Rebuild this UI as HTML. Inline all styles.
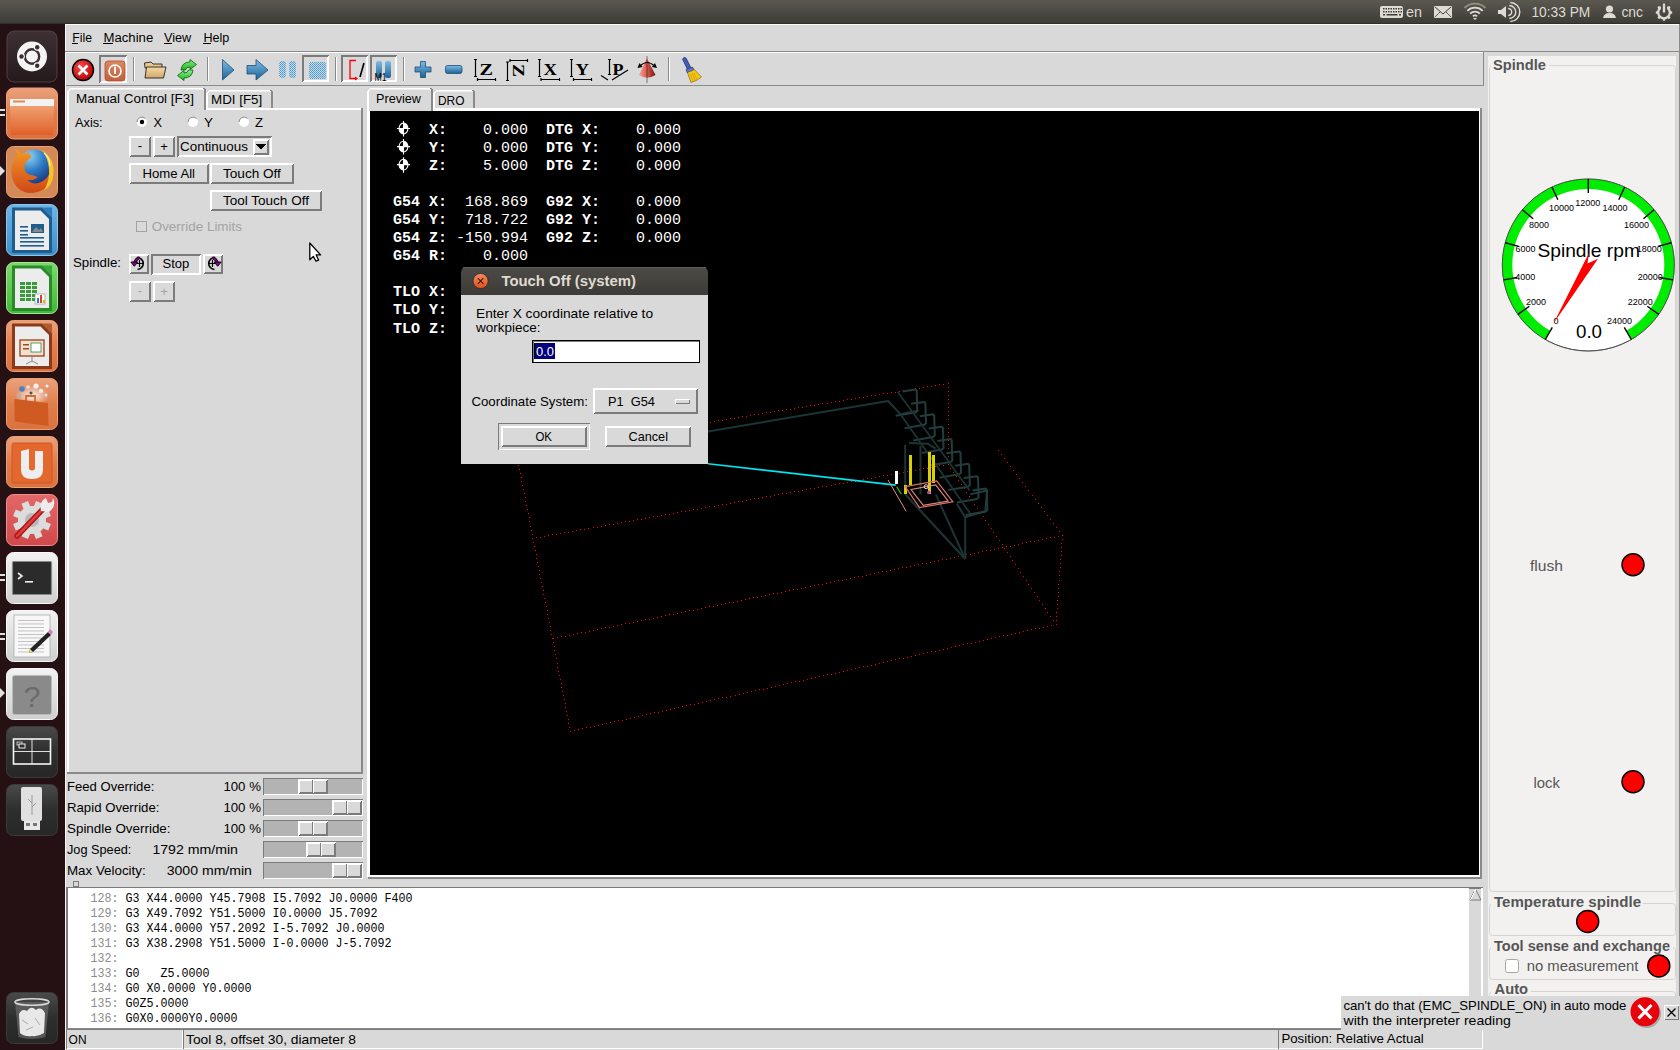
<!DOCTYPE html>
<html><head><meta charset="utf-8"><style>html,body{margin:0;padding:0;width:1680px;height:1050px;overflow:hidden;background:#d9d9d9}
text{white-space:pre}</style></head><body>
<svg width="1680" height="1050" viewBox="0 0 1680 1050" style="position:absolute;left:0;top:0" shape-rendering="crispEdges">
<defs>
<linearGradient id="panel" x1="0" y1="0" x2="0" y2="1"><stop offset="0" stop-color="#5b5850"/><stop offset="1" stop-color="#3c3b37"/></linearGradient>
<linearGradient id="ttl" x1="0" y1="0" x2="0" y2="1"><stop offset="0" stop-color="#4c4b46"/><stop offset="1" stop-color="#3c3b37"/></linearGradient>
</defs>
<rect x="0" y="0" width="1680" height="1050" fill="#d9d9d9" />
<rect x="0" y="0" width="1680" height="24" fill="url(#panel)" />
<rect x="0" y="23" width="1680" height="1" fill="#2f2e2a" />
<rect x="0" y="24" width="65" height="1026" fill="#251014" />
<rect x="65" y="24" width="1" height="1026" fill="#f6f6f6" />
<rect x="65" y="24" width="1615" height="1" fill="#fafafa" />
<text x="72.3" y="42" font-family="Liberation Sans" font-size="12.5" fill="#000" textLength="19.74" lengthAdjust="spacingAndGlyphs" >File</text>
<text x="103.4" y="42" font-family="Liberation Sans" font-size="12.5" fill="#000" textLength="49.85" lengthAdjust="spacingAndGlyphs" >Machine</text>
<text x="164.0" y="42" font-family="Liberation Sans" font-size="12.5" fill="#000" textLength="27.27" lengthAdjust="spacingAndGlyphs" >View</text>
<text x="203.4" y="42" font-family="Liberation Sans" font-size="12.5" fill="#000" textLength="25.91" lengthAdjust="spacingAndGlyphs" >Help</text>
<rect x="72" y="43" width="6" height="1" fill="#000" />
<rect x="103" y="43" width="10" height="1" fill="#000" />
<rect x="164" y="43" width="8" height="1" fill="#000" />
<rect x="203" y="43" width="8" height="1" fill="#000" />
<rect x="65" y="51" width="1615" height="1" fill="#8a8a8a" />
<rect x="66" y="52" width="1614" height="1" fill="#ffffff" />
<rect x="66" y="85" width="1418" height="1" fill="#8a8a8a" />
<rect x="1483" y="52" width="1" height="34" fill="#8a8a8a" />
<rect x="99" y="55" width="28" height="28" fill="#d9d9d9" />
<polygon points="99,55 127,55 125,57 101,57 101,81 99,83" fill="#7b7b7b"/>
<polygon points="127,55 127,83 99,83 101,81 125,81 125,57" fill="#ffffff"/>
<rect x="302" y="55" width="27" height="27" fill="#d9d9d9" />
<polygon points="302,55 329,55 327,57 304,57 304,80 302,82" fill="#7b7b7b"/>
<polygon points="329,55 329,82 302,82 304,80 327,80 327,57" fill="#ffffff"/>
<rect x="341" y="55" width="27" height="27" fill="#d9d9d9" />
<polygon points="341,55 368,55 366,57 343,57 343,80 341,82" fill="#7b7b7b"/>
<polygon points="368,55 368,82 341,82 343,80 366,80 366,57" fill="#ffffff"/>
<rect x="370" y="55" width="27" height="27" fill="#d9d9d9" />
<polygon points="370,55 397,55 395,57 372,57 372,80 370,82" fill="#7b7b7b"/>
<polygon points="397,55 397,82 370,82 372,80 395,80 395,57" fill="#ffffff"/>
<rect x="133" y="57" width="1" height="24" fill="#8a8a8a" />
<rect x="134" y="57" width="1" height="24" fill="#ffffff" />
<rect x="207" y="57" width="1" height="24" fill="#8a8a8a" />
<rect x="208" y="57" width="1" height="24" fill="#ffffff" />
<rect x="335" y="57" width="1" height="24" fill="#8a8a8a" />
<rect x="336" y="57" width="1" height="24" fill="#ffffff" />
<rect x="403" y="57" width="1" height="24" fill="#8a8a8a" />
<rect x="404" y="57" width="1" height="24" fill="#ffffff" />
<rect x="668" y="57" width="1" height="24" fill="#8a8a8a" />
<rect x="669" y="57" width="1" height="24" fill="#ffffff" />
<defs>
<radialGradient id="estop" cx="0.4" cy="0.35" r="0.7"><stop offset="0" stop-color="#ff4a4a"/><stop offset="1" stop-color="#b00000"/></radialGradient>
<linearGradient id="pwr" x1="0" y1="0" x2="0" y2="1"><stop offset="0" stop-color="#d98a64"/><stop offset="1" stop-color="#c0603c"/></linearGradient>
<linearGradient id="fold" x1="0" y1="0" x2="0" y2="1"><stop offset="0" stop-color="#f3d9a6"/><stop offset="1" stop-color="#d2a868"/></linearGradient>
<linearGradient id="blu" x1="0" y1="0" x2="0" y2="1"><stop offset="0" stop-color="#7fbde3"/><stop offset="1" stop-color="#1d6296"/></linearGradient>
<linearGradient id="grn" x1="0" y1="0" x2="0" y2="1"><stop offset="0" stop-color="#8af08a"/><stop offset="1" stop-color="#18b418"/></linearGradient>
<pattern id="dots" width="2" height="2" patternUnits="userSpaceOnUse"><rect width="2" height="2" fill="#c2dcec"/><rect width="1" height="1" fill="#4f93c2"/><rect x="1" y="1" width="1" height="1" fill="#6aa6cf"/></pattern>
<linearGradient id="cone" x1="0" y1="0" x2="1" y2="0"><stop offset="0" stop-color="#f4a59a"/><stop offset="0.5" stop-color="#d9574a"/><stop offset="1" stop-color="#6e1a14"/></linearGradient>
</defs>
<g shape-rendering="geometricPrecision">
<circle cx="83" cy="70" r="10.5" fill="url(#estop)" stroke="#000" stroke-width="1.4"/>
<path d="M78.5,65.5 L87.5,74.5 M87.5,65.5 L78.5,74.5" stroke="#fff" stroke-width="2.6"/>
<rect x="105" y="61" width="20" height="20" rx="3" fill="url(#pwr)" stroke="#c4452e" stroke-width="0.8"/>
<circle cx="115" cy="71" r="6" fill="none" stroke="#fff" stroke-width="1.6"/>
<path d="M115,66.5 V74" stroke="#fff" stroke-width="1.8"/>
<path d="M144.5,63 L151,62 L153,64 L162,64 L162,68 L145,68 Z" fill="#e9c68b" stroke="#222" stroke-width="0.9"/>
<path d="M145,78 L146.5,67 L166,67 L163.5,78 Z" fill="url(#fold)" stroke="#222" stroke-width="0.9"/>
<path d="M181,70 Q182,62 190,62 L190,59.5 L196.5,64.5 L190,69.5 L190,67 Q186,67 185.5,70 Z" fill="url(#grn)" stroke="#0a5a0a" stroke-width="0.8"/>
<path d="M193,70 Q192,78 184,78 L184,80.5 L177.5,75.5 L184,70.5 L184,73 Q188,73 188.5,70 Z" fill="url(#grn)" stroke="#0a5a0a" stroke-width="0.8"/>
<path d="M222.5,59.5 L234,70 L222.5,80 Z" fill="url(#blu)" stroke="#1a4f78" stroke-width="0.8" stroke-linejoin="round"/>
<path d="M247,65.5 L256,65.5 L256,59.5 L268,70 L256,80 L256,74 L247,74 Z" fill="url(#blu)" stroke="#1a4f78" stroke-width="0.8" stroke-linejoin="round"/>
<rect x="279" y="61" width="7" height="17" rx="2.5" fill="url(#dots)"/>
<rect x="289" y="61" width="7" height="17" rx="2.5" fill="url(#dots)"/>
<rect x="309" y="62" width="17" height="17" rx="2" fill="url(#dots)"/>
<path d="M356,60.5 L350,60.5 L350,78.5 L357,78.5" stroke="#ff0000" stroke-width="1.3" fill="none"/>
<path d="M355,76.5 L358,78.5 L355,80.5 Z" fill="#ff0000"/>
<path d="M364,63 L360,77" stroke="#000" stroke-width="1.6"/>
<rect x="376" y="61" width="6" height="17" rx="2" fill="url(#blu)"/>
<rect x="385" y="61" width="6" height="17" rx="2" fill="url(#blu)"/>
</g>
<text x="374.5" y="80.5" font-family="Liberation Sans" font-size="10" fill="#000" textLength="12" lengthAdjust="spacingAndGlyphs" >M1</text>
<g shape-rendering="geometricPrecision">
<path d="M420.5,61.5 h5 v5.5 h5.5 v5 h-5.5 v5.5 h-5 v-5.5 h-5.5 v-5 h5.5 z" fill="url(#blu)" stroke="#1a4f78" stroke-width="0.8" stroke-linejoin="round"/>
<rect x="445.5" y="65.5" width="16.5" height="8" rx="2" fill="url(#blu)" stroke="#1a4f78" stroke-width="0.8"/>
<path d="M475.5,59.5 V76.5 M474.0,59.5 H477.0 M474.0,76.5 H477.0" stroke="#000" stroke-width="1.2"/>
<path d="M477.5,79.5 H495.5 M477.5,78.0 V81.0 M495.5,78.0 V81.0" stroke="#000" stroke-width="1.2"/>
<path d="M539.5,59.5 V76.5 M538.0,59.5 H541.0 M538.0,76.5 H541.0" stroke="#000" stroke-width="1.2"/>
<path d="M541,79.5 H559.5 M541,78.0 V81.0 M559.5,78.0 V81.0" stroke="#000" stroke-width="1.2"/>
<path d="M571.5,59.5 V76.5 M570.0,59.5 H573.0 M570.0,76.5 H573.0" stroke="#000" stroke-width="1.2"/>
<path d="M573.5,79.5 H591.5 M573.5,78.0 V81.0 M591.5,78.0 V81.0" stroke="#000" stroke-width="1.2"/>
<path d="M507.5,62 V80.5 M506.0,62 H509.0 M506.0,80.5 H509.0" stroke="#000" stroke-width="1.2"/>
<path d="M510,60.5 H527.5 M510,59.0 V62.0 M527.5,59.0 V62.0" stroke="#000" stroke-width="1.2"/>
<path d="M609.5,59.5 V74.5 M608.0,59.5 H611.0 M608.0,74.5 H611.0" stroke="#000" stroke-width="1.2"/>
<path d="M601,75.5 L608,80 M612,80 L628,70" stroke="#000" stroke-width="1.2"/>
</g>
<text x="479.5" y="74.6" font-family="Liberation Serif" font-size="17" font-weight="bold" fill="#000" textLength="13.5" lengthAdjust="spacingAndGlyphs" >Z</text>
<text x="543.5" y="74.6" font-family="Liberation Serif" font-size="17" font-weight="bold" fill="#000" textLength="13.5" lengthAdjust="spacingAndGlyphs" >X</text>
<text x="575.5" y="74.6" font-family="Liberation Serif" font-size="17" font-weight="bold" fill="#000" textLength="13.5" lengthAdjust="spacingAndGlyphs" >Y</text>
<text x="612.5" y="74.6" font-family="Liberation Serif" font-size="17" font-weight="bold" fill="#000" textLength="11" lengthAdjust="spacingAndGlyphs" >P</text>
<text x="0" y="0" font-family="Liberation Serif" font-size="17" font-weight="bold" transform="translate(512.5,64) rotate(90)" textLength="13" lengthAdjust="spacingAndGlyphs">Z</text>
<g shape-rendering="geometricPrecision">
<path d="M647,58.5 L639,75 Q647,80.5 655.5,75 Z" fill="url(#cone)"/>
<path d="M647,56.5 V83" stroke="#000" stroke-width="0.9" stroke-dasharray="1 1"/>
<path d="M640,66 Q647,59 654.5,66" stroke="#000" stroke-width="1.1" fill="none"/>
<path d="M637.5,68 L639.5,63 L642.5,67 Z M657,68 L655,63 L652,67 Z" fill="#000"/>
<path d="M682.5,59 Q684,56.5 686,58 L691.5,69 L688,70.5 Z" fill="#4060c0" stroke="#16245a" stroke-width="0.7"/>
<path d="M686.5,70 L692.5,67.5 L701.5,77 Q697,81 691,82.5 Z" fill="#f5c516" stroke="#7a5a00" stroke-width="0.6"/>
<path d="M686,69.5 L692.5,67 L693.5,70 L687,72.5 Z" fill="#5a7ad8" stroke="#16245a" stroke-width="0.5"/>
<path d="M690,74 L693,81 M694,73 L697,80 M692,73 L695.5,81" stroke="#c8900a" stroke-width="0.6"/>
</g>
<rect x="1679" y="24" width="1" height="1026" fill="#8a8a8a" />
<rect x="67" y="91" width="2" height="683" fill="#ffffff" />
<rect x="206" y="108" width="156" height="2" fill="#ffffff" />
<rect x="361" y="108" width="2" height="666" fill="#8a8a8a" />
<rect x="67" y="772" width="296" height="2" fill="#8a8a8a" />
<rect x="206" y="93" width="2" height="15" fill="#ffffff" />
<rect x="209" y="90" width="62" height="1" fill="#ffffff" />
<rect x="209" y="91" width="62" height="1" fill="#eeeeee" />
<polygon points="206,93 209,90 209,92 208,93" fill="#ffffff"/>
<rect x="271" y="92" width="2" height="16" fill="#8a8a8a" />
<polygon points="270,90 271,90 273,92 271,92" fill="#8a8a8a"/>
<rect x="67" y="91" width="2" height="19" fill="#ffffff" />
<rect x="70" y="88" width="134" height="1" fill="#ffffff" />
<rect x="70" y="89" width="134" height="1" fill="#eeeeee" />
<polygon points="67,91 70,88 70,90 69,91" fill="#ffffff"/>
<rect x="204" y="90" width="2" height="20" fill="#8a8a8a" />
<polygon points="203,88 204,88 206,90 204,90" fill="#8a8a8a"/>
<text x="76.0" y="102.5" font-family="Liberation Sans" font-size="13" fill="#000" textLength="117.96" lengthAdjust="spacingAndGlyphs" >Manual Control [F3]</text>
<text x="211.0" y="104.3" font-family="Liberation Sans" font-size="13" fill="#000" textLength="51.24" lengthAdjust="spacingAndGlyphs" >MDI [F5]</text>
<rect x="433" y="108" width="1049" height="3" fill="#ffffff" />
<rect x="433" y="93" width="2" height="15" fill="#ffffff" />
<rect x="436" y="90" width="37" height="1" fill="#ffffff" />
<rect x="436" y="91" width="37" height="1" fill="#eeeeee" />
<polygon points="433,93 436,90 436,92 435,93" fill="#ffffff"/>
<rect x="473" y="92" width="2" height="16" fill="#8a8a8a" />
<polygon points="472,90 473,90 475,92 473,92" fill="#8a8a8a"/>
<rect x="367" y="91" width="2" height="20" fill="#ffffff" />
<rect x="370" y="88" width="61" height="1" fill="#ffffff" />
<rect x="370" y="89" width="61" height="1" fill="#eeeeee" />
<polygon points="367,91 370,88 370,90 369,91" fill="#ffffff"/>
<rect x="431" y="90" width="2" height="21" fill="#8a8a8a" />
<polygon points="430,88 431,88 433,90 431,90" fill="#8a8a8a"/>
<text x="376.0" y="103" font-family="Liberation Sans" font-size="13" fill="#000" textLength="44.94" lengthAdjust="spacingAndGlyphs" >Preview</text>
<text x="438.0" y="105" font-family="Liberation Sans" font-size="13" fill="#000" textLength="26.49" lengthAdjust="spacingAndGlyphs" >DRO</text>
<rect x="367" y="111" width="3" height="766" fill="#ffffff" />
<rect x="370" y="875" width="1110" height="2" fill="#ffffff" />
<rect x="1479" y="111" width="1" height="766" fill="#ffffff" />
<rect x="1480" y="108" width="2" height="771" fill="#8a8a8a" />
<rect x="1482" y="108" width="1" height="771" fill="#d9d9d9" />
<rect x="368" y="877" width="1114" height="2" fill="#8a8a8a" />
<rect x="370" y="111" width="1109" height="764" fill="#000000" />
<text x="75.0" y="127" font-family="Liberation Sans" font-size="13" fill="#000" textLength="27.67" lengthAdjust="spacingAndGlyphs" >Axis:</text>
<circle cx="142" cy="122" r="5" fill="#ffffff" shape-rendering="geometricPrecision"/>
<path d="M137,122 A5,5 0 0,1 145.5,118.5" stroke="#8a8a8a" stroke-width="1" fill="none" shape-rendering="geometricPrecision"/>
<circle cx="142" cy="122" r="2.2" fill="#000" shape-rendering="geometricPrecision"/>
<circle cx="193" cy="122" r="5" fill="#ffffff" shape-rendering="geometricPrecision"/>
<path d="M188,122 A5,5 0 0,1 196.5,118.5" stroke="#8a8a8a" stroke-width="1" fill="none" shape-rendering="geometricPrecision"/>
<circle cx="244" cy="122" r="5" fill="#ffffff" shape-rendering="geometricPrecision"/>
<path d="M239,122 A5,5 0 0,1 247.5,118.5" stroke="#8a8a8a" stroke-width="1" fill="none" shape-rendering="geometricPrecision"/>
<text x="153.5" y="127" font-family="Liberation Sans" font-size="13" fill="#000" textLength="8.47" lengthAdjust="spacingAndGlyphs" >X</text>
<text x="204.0" y="127" font-family="Liberation Sans" font-size="13" fill="#000" textLength="8.97" lengthAdjust="spacingAndGlyphs" >Y</text>
<text x="255.0" y="127" font-family="Liberation Sans" font-size="13" fill="#000" textLength="8.04" lengthAdjust="spacingAndGlyphs" >Z</text>
<rect x="129" y="136" width="22" height="21" fill="#d9d9d9" />
<polygon points="129,136 151,136 149,138 131,138 131,155 129,157" fill="#ffffff"/>
<polygon points="151,136 151,157 129,157 131,155 149,155 149,138" fill="#7b7b7b"/>
<rect x="153" y="136" width="22" height="21" fill="#d9d9d9" />
<polygon points="153,136 175,136 173,138 155,138 155,155 153,157" fill="#ffffff"/>
<polygon points="175,136 175,157 153,157 155,155 173,155 173,138" fill="#7b7b7b"/>
<text x="140" y="150" font-family="Liberation Sans" font-size="13" fill="#000" text-anchor="middle" >-</text>
<text x="164" y="151" font-family="Liberation Sans" font-size="13" fill="#000" text-anchor="middle" >+</text>
<rect x="177" y="136" width="95" height="21" fill="#d9d9d9" />
<polygon points="177,136 272,136 270,138 179,138 179,155 177,157" fill="#7b7b7b"/>
<polygon points="272,136 272,157 177,157 179,155 270,155 270,138" fill="#ffffff"/>
<rect x="253" y="139" width="16" height="16" fill="#d9d9d9" />
<polygon points="253,139 269,139 267,141 255,141 255,153 253,155" fill="#ffffff"/>
<polygon points="269,139 269,155 253,155 255,153 267,153 267,141" fill="#7b7b7b"/>
<polygon points="256,144 266,144 261,150" fill="#000"/>
<text x="180.0" y="151" font-family="Liberation Sans" font-size="13" fill="#000" textLength="67.96" lengthAdjust="spacingAndGlyphs" >Continuous</text>
<rect x="129" y="163" width="80" height="21" fill="#d9d9d9" />
<polygon points="129,163 209,163 207,165 131,165 131,182 129,184" fill="#ffffff"/>
<polygon points="209,163 209,184 129,184 131,182 207,182 207,165" fill="#7b7b7b"/>
<text x="142.4" y="178" font-family="Liberation Sans" font-size="13" fill="#000" textLength="52.62" lengthAdjust="spacingAndGlyphs" >Home All</text>
<rect x="210" y="163" width="84" height="21" fill="#d9d9d9" />
<polygon points="210,163 294,163 292,165 212,165 212,182 210,184" fill="#ffffff"/>
<polygon points="294,163 294,184 210,184 212,182 292,182 292,165" fill="#7b7b7b"/>
<text x="223.0" y="178" font-family="Liberation Sans" font-size="13" fill="#000" textLength="57.9" lengthAdjust="spacingAndGlyphs" >Touch Off</text>
<rect x="210" y="190" width="112" height="21" fill="#d9d9d9" />
<polygon points="210,190 322,190 320,192 212,192 212,209 210,211" fill="#ffffff"/>
<polygon points="322,190 322,211 210,211 212,209 320,209 320,192" fill="#7b7b7b"/>
<text x="223.0" y="204.6" font-family="Liberation Sans" font-size="13" fill="#000" textLength="85.93" lengthAdjust="spacingAndGlyphs" >Tool Touch Off</text>
<rect x="136" y="221" width="11" height="11" fill="#a3a3a3" />
<rect x="137" y="222" width="9" height="9" fill="#d9d9d9" />
<text x="151.7" y="230.5" font-family="Liberation Sans" font-size="13" fill="#a3a3a3" textLength="90.31" lengthAdjust="spacingAndGlyphs" >Override Limits</text>
<text x="73.0" y="267" font-family="Liberation Sans" font-size="13" fill="#000" textLength="47.98" lengthAdjust="spacingAndGlyphs" >Spindle:</text>
<rect x="129" y="254" width="20" height="20" fill="#d9d9d9" />
<polygon points="129,254 149,254 147,256 131,256 131,272 129,274" fill="#ffffff"/>
<polygon points="149,254 149,274 129,274 131,272 147,272 147,256" fill="#7b7b7b"/>
<rect x="151" y="254" width="50" height="21" fill="#d9d9d9" />
<polygon points="151,254 201,254 199,256 153,256 153,273 151,275" fill="#7b7b7b"/>
<polygon points="201,254 201,275 151,275 153,273 199,273 199,256" fill="#ffffff"/>
<text x="162.5" y="268" font-family="Liberation Sans" font-size="13" fill="#000" textLength="26.84" lengthAdjust="spacingAndGlyphs" >Stop</text>
<rect x="203" y="254" width="20" height="20" fill="#d9d9d9" />
<polygon points="203,254 223,254 221,256 205,256 205,272 203,274" fill="#ffffff"/>
<polygon points="223,254 223,274 203,274 205,272 221,272 221,256" fill="#7b7b7b"/>
<g shape-rendering="geometricPrecision" transform="translate(0 0)"><path d="M137,257.5 A6,6 0 1,1 137.5,269.5" stroke="#000" stroke-width="1.6" fill="none"/><path d="M139.5,260 V267 M137,263.5 H143" stroke="#000" stroke-width="1.2" fill="none"/><path d="M139.5,257.8 Q136,258.5 134.3,264" stroke="#000" stroke-width="3" fill="none"/><path d="M139.5,257.8 Q136,258.5 134.3,264" stroke="#8a008a" stroke-width="1.5" fill="none"/><polygon points="130.8,262 134.3,266.3 137.8,262" fill="#8a008a" stroke="#000" stroke-width="0.9"/></g>
<g shape-rendering="geometricPrecision" transform="translate(352 0) scale(-1 1)"><path d="M137,257.5 A6,6 0 1,1 137.5,269.5" stroke="#000" stroke-width="1.6" fill="none"/><path d="M139.5,260 V267 M137,263.5 H143" stroke="#000" stroke-width="1.2" fill="none"/><path d="M139.5,257.8 Q136,258.5 134.3,264" stroke="#000" stroke-width="3" fill="none"/><path d="M139.5,257.8 Q136,258.5 134.3,264" stroke="#8a008a" stroke-width="1.5" fill="none"/><polygon points="130.8,262 134.3,266.3 137.8,262" fill="#8a008a" stroke="#000" stroke-width="0.9"/></g>
<rect x="129" y="281" width="22" height="21" fill="#d9d9d9" />
<polygon points="129,281 151,281 149,283 131,283 131,300 129,302" fill="#ffffff"/>
<polygon points="151,281 151,302 129,302 131,300 149,300 149,283" fill="#7b7b7b"/>
<rect x="153" y="281" width="22" height="21" fill="#d9d9d9" />
<polygon points="153,281 175,281 173,283 155,283 155,300 153,302" fill="#ffffff"/>
<polygon points="175,281 175,302 153,302 155,300 173,300 173,283" fill="#7b7b7b"/>
<text x="140" y="295" font-family="Liberation Sans" font-size="13" fill="#a3a3a3" text-anchor="middle" >-</text>
<text x="164" y="296" font-family="Liberation Sans" font-size="13" fill="#a3a3a3" text-anchor="middle" >+</text>
<text x="67.0" y="790.7" font-family="Liberation Sans" font-size="13" fill="#000" textLength="87.3" lengthAdjust="spacingAndGlyphs" >Feed Override:</text>
<text x="223.4" y="790.7" font-family="Liberation Sans" font-size="13" fill="#000" textLength="37.56" lengthAdjust="spacingAndGlyphs" >100 %</text>
<rect x="263" y="778" width="100" height="17" fill="#b3b3b3" />
<polygon points="263,778 363,778 362,779 264,779 264,794 263,795" fill="#7b7b7b"/>
<polygon points="363,778 363,795 263,795 264,794 362,794 362,779" fill="#ffffff"/>
<rect x="298" y="779" width="30" height="15" fill="#d9d9d9" />
<polygon points="298,779 328,779 326,781 300,781 300,792 298,794" fill="#ffffff"/>
<polygon points="328,779 328,794 298,794 300,792 326,792 326,781" fill="#7b7b7b"/>
<rect x="312" y="780" width="1" height="13" fill="#7b7b7b" />
<rect x="313" y="780" width="1" height="13" fill="#ffffff" />
<text x="67.0" y="811.7" font-family="Liberation Sans" font-size="13" fill="#000" textLength="92.44" lengthAdjust="spacingAndGlyphs" >Rapid Override:</text>
<text x="223.4" y="811.7" font-family="Liberation Sans" font-size="13" fill="#000" textLength="37.56" lengthAdjust="spacingAndGlyphs" >100 %</text>
<rect x="263" y="799" width="100" height="17" fill="#b3b3b3" />
<polygon points="263,799 363,799 362,800 264,800 264,815 263,816" fill="#7b7b7b"/>
<polygon points="363,799 363,816 263,816 264,815 362,815 362,800" fill="#ffffff"/>
<rect x="332" y="800" width="30" height="15" fill="#d9d9d9" />
<polygon points="332,800 362,800 360,802 334,802 334,813 332,815" fill="#ffffff"/>
<polygon points="362,800 362,815 332,815 334,813 360,813 360,802" fill="#7b7b7b"/>
<rect x="346" y="801" width="1" height="13" fill="#7b7b7b" />
<rect x="347" y="801" width="1" height="13" fill="#ffffff" />
<text x="67.0" y="832.6" font-family="Liberation Sans" font-size="13" fill="#000" textLength="103.54" lengthAdjust="spacingAndGlyphs" >Spindle Override:</text>
<text x="223.4" y="832.6" font-family="Liberation Sans" font-size="13" fill="#000" textLength="37.56" lengthAdjust="spacingAndGlyphs" >100 %</text>
<rect x="263" y="820" width="100" height="17" fill="#b3b3b3" />
<polygon points="263,820 363,820 362,821 264,821 264,836 263,837" fill="#7b7b7b"/>
<polygon points="363,820 363,837 263,837 264,836 362,836 362,821" fill="#ffffff"/>
<rect x="298" y="821" width="30" height="15" fill="#d9d9d9" />
<polygon points="298,821 328,821 326,823 300,823 300,834 298,836" fill="#ffffff"/>
<polygon points="328,821 328,836 298,836 300,834 326,834 326,823" fill="#7b7b7b"/>
<rect x="312" y="822" width="1" height="13" fill="#7b7b7b" />
<rect x="313" y="822" width="1" height="13" fill="#ffffff" />
<text x="67.0" y="853.6" font-family="Liberation Sans" font-size="13" fill="#000" textLength="64.37" lengthAdjust="spacingAndGlyphs" >Jog Speed:</text>
<text x="152.4" y="853.6" font-family="Liberation Sans" font-size="13" fill="#000" textLength="85.55" lengthAdjust="spacingAndGlyphs" >1792 mm/min</text>
<rect x="263" y="841" width="100" height="17" fill="#b3b3b3" />
<polygon points="263,841 363,841 362,842 264,842 264,857 263,858" fill="#7b7b7b"/>
<polygon points="363,841 363,858 263,858 264,857 362,857 362,842" fill="#ffffff"/>
<rect x="306" y="842" width="30" height="15" fill="#d9d9d9" />
<polygon points="306,842 336,842 334,844 308,844 308,855 306,857" fill="#ffffff"/>
<polygon points="336,842 336,857 306,857 308,855 334,855 334,844" fill="#7b7b7b"/>
<rect x="320" y="843" width="1" height="13" fill="#7b7b7b" />
<rect x="321" y="843" width="1" height="13" fill="#ffffff" />
<text x="67.0" y="874.5" font-family="Liberation Sans" font-size="13" fill="#000" textLength="78.68" lengthAdjust="spacingAndGlyphs" >Max Velocity:</text>
<text x="166.7" y="874.5" font-family="Liberation Sans" font-size="13" fill="#000" textLength="85.25" lengthAdjust="spacingAndGlyphs" >3000 mm/min</text>
<rect x="263" y="862" width="100" height="17" fill="#b3b3b3" />
<polygon points="263,862 363,862 362,863 264,863 264,878 263,879" fill="#7b7b7b"/>
<polygon points="363,862 363,879 263,879 264,878 362,878 362,863" fill="#ffffff"/>
<rect x="332" y="863" width="30" height="15" fill="#d9d9d9" />
<polygon points="332,863 362,863 360,865 334,865 334,876 332,878" fill="#ffffff"/>
<polygon points="362,863 362,878 332,878 334,876 360,876 360,865" fill="#7b7b7b"/>
<rect x="346" y="864" width="1" height="13" fill="#7b7b7b" />
<rect x="347" y="864" width="1" height="13" fill="#ffffff" />
<rect x="73" y="881" width="6" height="6" fill="#7b7b7b" />
<rect x="74" y="882" width="4" height="4" fill="#d9d9d9" />
<text y="133.6" font-family="Liberation Mono" font-size="15" fill="#fff" style="white-space:pre"><tspan x="393" font-weight="bold">    X:    </tspan><tspan x="483" font-weight="normal">0.000</tspan><tspan x="528" font-weight="bold">  DTG X:    </tspan><tspan x="636" font-weight="normal">0.000</tspan></text>
<text y="151.7" font-family="Liberation Mono" font-size="15" fill="#fff" style="white-space:pre"><tspan x="393" font-weight="bold">    Y:    </tspan><tspan x="483" font-weight="normal">0.000</tspan><tspan x="528" font-weight="bold">  DTG Y:    </tspan><tspan x="636" font-weight="normal">0.000</tspan></text>
<text y="169.8" font-family="Liberation Mono" font-size="15" fill="#fff" style="white-space:pre"><tspan x="393" font-weight="bold">    Z:    </tspan><tspan x="483" font-weight="normal">5.000</tspan><tspan x="528" font-weight="bold">  DTG Z:    </tspan><tspan x="636" font-weight="normal">0.000</tspan></text>
<text y="205.9" font-family="Liberation Mono" font-size="15" fill="#fff" style="white-space:pre"><tspan x="393" font-weight="bold">G</tspan><tspan x="402" font-weight="bold">54</tspan><tspan x="420" font-weight="bold"> X:  </tspan><tspan x="465" font-weight="normal">168.869</tspan><tspan x="528" font-weight="bold">  G</tspan><tspan x="555" font-weight="bold">92</tspan><tspan x="573" font-weight="bold"> X:    </tspan><tspan x="636" font-weight="normal">0.000</tspan></text>
<text y="224.0" font-family="Liberation Mono" font-size="15" fill="#fff" style="white-space:pre"><tspan x="393" font-weight="bold">G</tspan><tspan x="402" font-weight="bold">54</tspan><tspan x="420" font-weight="bold"> Y:  </tspan><tspan x="465" font-weight="normal">718.722</tspan><tspan x="528" font-weight="bold">  G</tspan><tspan x="555" font-weight="bold">92</tspan><tspan x="573" font-weight="bold"> Y:    </tspan><tspan x="636" font-weight="normal">0.000</tspan></text>
<text y="242.1" font-family="Liberation Mono" font-size="15" fill="#fff" style="white-space:pre"><tspan x="393" font-weight="bold">G</tspan><tspan x="402" font-weight="bold">54</tspan><tspan x="420" font-weight="bold"> Z: </tspan><tspan x="456" font-weight="normal">-150.994</tspan><tspan x="528" font-weight="bold">  G</tspan><tspan x="555" font-weight="bold">92</tspan><tspan x="573" font-weight="bold"> Z:    </tspan><tspan x="636" font-weight="normal">0.000</tspan></text>
<text y="260.2" font-family="Liberation Mono" font-size="15" fill="#fff" style="white-space:pre"><tspan x="393" font-weight="bold">G</tspan><tspan x="402" font-weight="bold">54</tspan><tspan x="420" font-weight="bold"> R:    </tspan><tspan x="483" font-weight="normal">0.000</tspan></text>
<text y="296.3" font-family="Liberation Mono" font-size="15" fill="#fff" style="white-space:pre"><tspan x="393" font-weight="bold">TLO X:    </tspan><tspan x="483" font-weight="normal">0.000</tspan></text>
<text y="314.4" font-family="Liberation Mono" font-size="15" fill="#fff" style="white-space:pre"><tspan x="393" font-weight="bold">TLO Y:    </tspan><tspan x="483" font-weight="normal">0.000</tspan></text>
<text y="332.5" font-family="Liberation Mono" font-size="15" fill="#fff" style="white-space:pre"><tspan x="393" font-weight="bold">TLO Z:    </tspan><tspan x="483" font-weight="normal">0.000</tspan></text>
<g shape-rendering="geometricPrecision"><ellipse cx="403.5" cy="128.5" rx="4.4" ry="5.4" fill="none" stroke="#fff" stroke-width="1.1"/><path d="M403.5,128.5 V123.1 A4.4,5.4 0 0,1 407.9,128.5 z M403.5,128.5 V133.9 A4.4,5.4 0 0,1 399.1,128.5 z" fill="#fff"/><path d="M397.0,128.5 H410.0 M403.5,121.0 V136.5" stroke="#fff" stroke-width="1.1"/></g>
<g shape-rendering="geometricPrecision"><ellipse cx="403.5" cy="146.57999999999998" rx="4.4" ry="5.4" fill="none" stroke="#fff" stroke-width="1.1"/><path d="M403.5,146.57999999999998 V141.17999999999998 A4.4,5.4 0 0,1 407.9,146.57999999999998 z M403.5,146.57999999999998 V151.98 A4.4,5.4 0 0,1 399.1,146.57999999999998 z" fill="#fff"/><path d="M397.0,146.57999999999998 H410.0 M403.5,139.07999999999998 V154.57999999999998" stroke="#fff" stroke-width="1.1"/></g>
<g shape-rendering="geometricPrecision"><ellipse cx="403.5" cy="164.66" rx="4.4" ry="5.4" fill="none" stroke="#fff" stroke-width="1.1"/><path d="M403.5,164.66 V159.26 A4.4,5.4 0 0,1 407.9,164.66 z M403.5,164.66 V170.06 A4.4,5.4 0 0,1 399.1,164.66 z" fill="#fff"/><path d="M397.0,164.66 H410.0 M403.5,157.16 V172.66" stroke="#fff" stroke-width="1.1"/></g>
<path d="M516,453h1v1h-1zM517,457h1v1h-1zM518,461h1v1h-1zM518,465h1v1h-1zM519,469h1v1h-1zM520,473h1v1h-1zM521,477h1v1h-1zM521,481h1v1h-1zM522,485h1v1h-1zM523,489h1v1h-1zM524,493h1v1h-1zM525,497h1v1h-1zM525,501h1v1h-1zM526,505h1v1h-1zM527,509h1v1h-1zM528,513h1v1h-1zM529,517h1v1h-1zM529,521h1v1h-1zM530,526h1v1h-1zM531,530h1v1h-1zM532,534h1v1h-1zM532,538h1v1h-1zM533,542h1v1h-1zM534,546h1v1h-1zM535,550h1v1h-1zM536,554h1v1h-1zM536,558h1v1h-1zM537,562h1v1h-1zM538,566h1v1h-1zM539,570h1v1h-1zM539,574h1v1h-1zM540,578h1v1h-1zM541,582h1v1h-1zM542,586h1v1h-1zM543,590h1v1h-1zM543,594h1v1h-1zM544,598h1v1h-1zM545,602h1v1h-1zM546,606h1v1h-1zM547,610h1v1h-1zM547,614h1v1h-1zM548,618h1v1h-1zM549,622h1v1h-1zM550,626h1v1h-1zM550,630h1v1h-1zM551,634h1v1h-1zM552,638h1v1h-1zM553,642h1v1h-1zM554,646h1v1h-1zM554,650h1v1h-1zM555,654h1v1h-1zM556,658h1v1h-1zM557,663h1v1h-1zM557,667h1v1h-1zM558,671h1v1h-1zM559,675h1v1h-1zM560,679h1v1h-1zM561,683h1v1h-1zM561,687h1v1h-1zM562,691h1v1h-1zM563,695h1v1h-1zM564,699h1v1h-1zM565,703h1v1h-1zM565,707h1v1h-1zM566,711h1v1h-1zM567,715h1v1h-1zM568,719h1v1h-1zM568,723h1v1h-1zM569,727h1v1h-1zM570,731h1v1h-1zM516,453h1v1h-1zM520,452h1v1h-1zM524,452h1v1h-1zM528,451h1v1h-1zM532,450h1v1h-1zM536,450h1v1h-1zM540,449h1v1h-1zM544,448h1v1h-1zM548,448h1v1h-1zM552,447h1v1h-1zM556,446h1v1h-1zM560,446h1v1h-1zM564,445h1v1h-1zM568,444h1v1h-1zM572,444h1v1h-1zM576,443h1v1h-1zM581,443h1v1h-1zM585,442h1v1h-1zM589,441h1v1h-1zM593,441h1v1h-1zM597,440h1v1h-1zM601,439h1v1h-1zM605,439h1v1h-1zM609,438h1v1h-1zM613,437h1v1h-1zM617,437h1v1h-1zM621,436h1v1h-1zM625,435h1v1h-1zM629,435h1v1h-1zM633,434h1v1h-1zM637,433h1v1h-1zM641,433h1v1h-1zM645,432h1v1h-1zM649,431h1v1h-1zM653,431h1v1h-1zM657,430h1v1h-1zM661,429h1v1h-1zM665,429h1v1h-1zM669,428h1v1h-1zM673,427h1v1h-1zM677,427h1v1h-1zM681,426h1v1h-1zM685,426h1v1h-1zM689,425h1v1h-1zM693,424h1v1h-1zM697,424h1v1h-1zM702,423h1v1h-1zM706,422h1v1h-1zM710,422h1v1h-1zM714,421h1v1h-1zM718,420h1v1h-1zM722,420h1v1h-1zM726,419h1v1h-1zM730,418h1v1h-1zM734,418h1v1h-1zM738,417h1v1h-1zM742,416h1v1h-1zM746,416h1v1h-1zM750,415h1v1h-1zM754,414h1v1h-1zM758,414h1v1h-1zM762,413h1v1h-1zM766,412h1v1h-1zM770,412h1v1h-1zM774,411h1v1h-1zM778,410h1v1h-1zM782,410h1v1h-1zM786,409h1v1h-1zM790,409h1v1h-1zM794,408h1v1h-1zM798,407h1v1h-1zM802,407h1v1h-1zM806,406h1v1h-1zM810,405h1v1h-1zM814,405h1v1h-1zM818,404h1v1h-1zM822,403h1v1h-1zM827,403h1v1h-1zM831,402h1v1h-1zM835,401h1v1h-1zM839,401h1v1h-1zM843,400h1v1h-1zM847,399h1v1h-1zM851,399h1v1h-1zM855,398h1v1h-1zM859,397h1v1h-1zM863,397h1v1h-1zM867,396h1v1h-1zM871,395h1v1h-1zM875,395h1v1h-1zM879,394h1v1h-1zM883,393h1v1h-1zM887,393h1v1h-1zM891,392h1v1h-1zM895,392h1v1h-1zM899,391h1v1h-1zM903,390h1v1h-1zM907,390h1v1h-1zM911,389h1v1h-1zM915,388h1v1h-1zM919,388h1v1h-1zM923,387h1v1h-1zM927,386h1v1h-1zM931,386h1v1h-1zM935,385h1v1h-1zM939,384h1v1h-1zM943,384h1v1h-1zM948,383h1v1h-1zM532,538h1v1h-1zM536,537h1v1h-1zM540,537h1v1h-1zM544,536h1v1h-1zM548,535h1v1h-1zM552,534h1v1h-1zM556,534h1v1h-1zM560,533h1v1h-1zM564,532h1v1h-1zM568,532h1v1h-1zM572,531h1v1h-1zM576,530h1v1h-1zM580,529h1v1h-1zM584,529h1v1h-1zM588,528h1v1h-1zM593,527h1v1h-1zM597,527h1v1h-1zM601,526h1v1h-1zM605,525h1v1h-1zM609,524h1v1h-1zM613,524h1v1h-1zM617,523h1v1h-1zM621,522h1v1h-1zM625,521h1v1h-1zM629,521h1v1h-1zM633,520h1v1h-1zM637,519h1v1h-1zM641,519h1v1h-1zM645,518h1v1h-1zM649,517h1v1h-1zM653,516h1v1h-1zM657,516h1v1h-1zM661,515h1v1h-1zM665,514h1v1h-1zM669,514h1v1h-1zM673,513h1v1h-1zM677,512h1v1h-1zM681,511h1v1h-1zM685,511h1v1h-1zM689,510h1v1h-1zM693,509h1v1h-1zM697,509h1v1h-1zM701,508h1v1h-1zM705,507h1v1h-1zM709,506h1v1h-1zM714,506h1v1h-1zM718,505h1v1h-1zM722,504h1v1h-1zM726,504h1v1h-1zM730,503h1v1h-1zM734,502h1v1h-1zM738,501h1v1h-1zM742,501h1v1h-1zM746,500h1v1h-1zM750,499h1v1h-1zM754,498h1v1h-1zM758,498h1v1h-1zM762,497h1v1h-1zM766,496h1v1h-1zM770,496h1v1h-1zM774,495h1v1h-1zM778,494h1v1h-1zM782,493h1v1h-1zM786,493h1v1h-1zM790,492h1v1h-1zM794,491h1v1h-1zM798,491h1v1h-1zM802,490h1v1h-1zM806,489h1v1h-1zM810,488h1v1h-1zM814,488h1v1h-1zM818,487h1v1h-1zM822,486h1v1h-1zM826,486h1v1h-1zM831,485h1v1h-1zM835,484h1v1h-1zM839,483h1v1h-1zM843,483h1v1h-1zM847,482h1v1h-1zM851,481h1v1h-1zM855,481h1v1h-1zM859,480h1v1h-1zM863,479h1v1h-1zM867,478h1v1h-1zM871,478h1v1h-1zM875,477h1v1h-1zM879,476h1v1h-1zM883,475h1v1h-1zM887,475h1v1h-1zM891,474h1v1h-1zM895,473h1v1h-1zM899,473h1v1h-1zM903,472h1v1h-1zM907,471h1v1h-1zM911,470h1v1h-1zM915,470h1v1h-1zM919,469h1v1h-1zM923,468h1v1h-1zM927,468h1v1h-1zM931,467h1v1h-1zM935,466h1v1h-1zM939,465h1v1h-1zM943,465h1v1h-1zM948,464h1v1h-1zM553,638h1v1h-1zM557,637h1v1h-1zM561,636h1v1h-1zM565,636h1v1h-1zM569,635h1v1h-1zM573,634h1v1h-1zM577,633h1v1h-1zM581,632h1v1h-1zM585,632h1v1h-1zM589,631h1v1h-1zM593,630h1v1h-1zM597,629h1v1h-1zM601,628h1v1h-1zM605,627h1v1h-1zM609,627h1v1h-1zM613,626h1v1h-1zM617,625h1v1h-1zM621,624h1v1h-1zM625,623h1v1h-1zM629,623h1v1h-1zM633,622h1v1h-1zM637,621h1v1h-1zM641,620h1v1h-1zM645,619h1v1h-1zM649,619h1v1h-1zM653,618h1v1h-1zM657,617h1v1h-1zM661,616h1v1h-1zM665,615h1v1h-1zM669,614h1v1h-1zM673,614h1v1h-1zM677,613h1v1h-1zM681,612h1v1h-1zM685,611h1v1h-1zM689,610h1v1h-1zM693,610h1v1h-1zM697,609h1v1h-1zM701,608h1v1h-1zM705,607h1v1h-1zM709,606h1v1h-1zM713,606h1v1h-1zM717,605h1v1h-1zM721,604h1v1h-1zM725,603h1v1h-1zM729,602h1v1h-1zM733,602h1v1h-1zM737,601h1v1h-1zM741,600h1v1h-1zM745,599h1v1h-1zM749,598h1v1h-1zM753,597h1v1h-1zM757,597h1v1h-1zM761,596h1v1h-1zM765,595h1v1h-1zM769,594h1v1h-1zM773,593h1v1h-1zM777,593h1v1h-1zM781,592h1v1h-1zM785,591h1v1h-1zM789,590h1v1h-1zM793,589h1v1h-1zM797,589h1v1h-1zM801,588h1v1h-1zM805,587h1v1h-1zM810,586h1v1h-1zM814,585h1v1h-1zM818,584h1v1h-1zM822,584h1v1h-1zM826,583h1v1h-1zM830,582h1v1h-1zM834,581h1v1h-1zM838,580h1v1h-1zM842,580h1v1h-1zM846,579h1v1h-1zM850,578h1v1h-1zM854,577h1v1h-1zM858,576h1v1h-1zM862,576h1v1h-1zM866,575h1v1h-1zM870,574h1v1h-1zM874,573h1v1h-1zM878,572h1v1h-1zM882,571h1v1h-1zM886,571h1v1h-1zM890,570h1v1h-1zM894,569h1v1h-1zM898,568h1v1h-1zM902,567h1v1h-1zM906,567h1v1h-1zM910,566h1v1h-1zM914,565h1v1h-1zM918,564h1v1h-1zM922,563h1v1h-1zM926,563h1v1h-1zM930,562h1v1h-1zM934,561h1v1h-1zM938,560h1v1h-1zM942,559h1v1h-1zM946,559h1v1h-1zM950,558h1v1h-1zM954,557h1v1h-1zM958,556h1v1h-1zM962,555h1v1h-1zM966,554h1v1h-1zM970,554h1v1h-1zM974,553h1v1h-1zM978,552h1v1h-1zM982,551h1v1h-1zM986,550h1v1h-1zM990,550h1v1h-1zM994,549h1v1h-1zM998,548h1v1h-1zM1002,547h1v1h-1zM1006,546h1v1h-1zM1010,546h1v1h-1zM1014,545h1v1h-1zM1018,544h1v1h-1zM1022,543h1v1h-1zM1026,542h1v1h-1zM1030,541h1v1h-1zM1034,541h1v1h-1zM1038,540h1v1h-1zM1042,539h1v1h-1zM1046,538h1v1h-1zM1050,537h1v1h-1zM1054,537h1v1h-1zM1058,536h1v1h-1zM1062,535h1v1h-1zM570,731h1v1h-1zM574,730h1v1h-1zM578,729h1v1h-1zM582,728h1v1h-1zM586,727h1v1h-1zM590,727h1v1h-1zM594,726h1v1h-1zM598,725h1v1h-1zM602,724h1v1h-1zM606,723h1v1h-1zM610,722h1v1h-1zM614,721h1v1h-1zM618,720h1v1h-1zM622,720h1v1h-1zM626,719h1v1h-1zM630,718h1v1h-1zM634,717h1v1h-1zM638,716h1v1h-1zM642,715h1v1h-1zM646,714h1v1h-1zM650,713h1v1h-1zM654,712h1v1h-1zM658,712h1v1h-1zM662,711h1v1h-1zM666,710h1v1h-1zM670,709h1v1h-1zM674,708h1v1h-1zM678,707h1v1h-1zM682,706h1v1h-1zM686,705h1v1h-1zM690,704h1v1h-1zM694,704h1v1h-1zM698,703h1v1h-1zM702,702h1v1h-1zM706,701h1v1h-1zM710,700h1v1h-1zM714,699h1v1h-1zM718,698h1v1h-1zM722,697h1v1h-1zM726,697h1v1h-1zM730,696h1v1h-1zM735,695h1v1h-1zM739,694h1v1h-1zM743,693h1v1h-1zM747,692h1v1h-1zM751,691h1v1h-1zM755,690h1v1h-1zM759,689h1v1h-1zM763,689h1v1h-1zM767,688h1v1h-1zM771,687h1v1h-1zM775,686h1v1h-1zM779,685h1v1h-1zM783,684h1v1h-1zM787,683h1v1h-1zM791,682h1v1h-1zM795,681h1v1h-1zM799,681h1v1h-1zM803,680h1v1h-1zM807,679h1v1h-1zM811,678h1v1h-1zM815,677h1v1h-1zM819,676h1v1h-1zM823,675h1v1h-1zM827,674h1v1h-1zM831,674h1v1h-1zM835,673h1v1h-1zM839,672h1v1h-1zM843,671h1v1h-1zM847,670h1v1h-1zM851,669h1v1h-1zM855,668h1v1h-1zM859,667h1v1h-1zM863,666h1v1h-1zM867,666h1v1h-1zM871,665h1v1h-1zM875,664h1v1h-1zM879,663h1v1h-1zM883,662h1v1h-1zM887,661h1v1h-1zM891,660h1v1h-1zM895,659h1v1h-1zM899,658h1v1h-1zM903,658h1v1h-1zM907,657h1v1h-1zM911,656h1v1h-1zM915,655h1v1h-1zM919,654h1v1h-1zM923,653h1v1h-1zM927,652h1v1h-1zM931,651h1v1h-1zM935,651h1v1h-1zM939,650h1v1h-1zM943,649h1v1h-1zM947,648h1v1h-1zM951,647h1v1h-1zM955,646h1v1h-1zM959,645h1v1h-1zM963,644h1v1h-1zM967,643h1v1h-1zM971,643h1v1h-1zM975,642h1v1h-1zM979,641h1v1h-1zM983,640h1v1h-1zM987,639h1v1h-1zM991,638h1v1h-1zM995,637h1v1h-1zM999,636h1v1h-1zM1003,635h1v1h-1zM1007,635h1v1h-1zM1011,634h1v1h-1zM1015,633h1v1h-1zM1019,632h1v1h-1zM1023,631h1v1h-1zM1027,630h1v1h-1zM1031,629h1v1h-1zM1035,628h1v1h-1zM1039,628h1v1h-1zM1043,627h1v1h-1zM1047,626h1v1h-1zM1051,625h1v1h-1zM1056,624h1v1h-1zM948,383h1v1h-1zM948,387h1v1h-1zM948,391h1v1h-1zM948,395h1v1h-1zM948,399h1v1h-1zM948,403h1v1h-1zM948,407h1v1h-1zM948,411h1v1h-1zM948,415h1v1h-1zM948,419h1v1h-1zM948,424h1v1h-1zM948,428h1v1h-1zM948,432h1v1h-1zM948,436h1v1h-1zM948,440h1v1h-1zM948,444h1v1h-1zM948,448h1v1h-1zM948,452h1v1h-1zM948,456h1v1h-1zM948,460h1v1h-1zM948,464h1v1h-1zM998,450h1v1h-1zM1001,454h1v1h-1zM1004,458h1v1h-1zM1007,462h1v1h-1zM1010,466h1v1h-1zM1013,470h1v1h-1zM1016,474h1v1h-1zM1019,478h1v1h-1zM1022,482h1v1h-1zM1025,486h1v1h-1zM1028,490h1v1h-1zM1032,495h1v1h-1zM1035,499h1v1h-1zM1038,503h1v1h-1zM1041,507h1v1h-1zM1044,511h1v1h-1zM1047,515h1v1h-1zM1050,519h1v1h-1zM1053,523h1v1h-1zM1056,527h1v1h-1zM1059,531h1v1h-1zM1062,535h1v1h-1zM948,464h1v1h-1zM950,468h1v1h-1zM953,472h1v1h-1zM956,476h1v1h-1zM958,480h1v1h-1zM961,484h1v1h-1zM964,488h1v1h-1zM966,492h1v1h-1zM969,496h1v1h-1zM972,500h1v1h-1zM974,504h1v1h-1zM977,508h1v1h-1zM980,512h1v1h-1zM983,516h1v1h-1zM985,520h1v1h-1zM988,524h1v1h-1zM991,528h1v1h-1zM993,532h1v1h-1zM996,536h1v1h-1zM999,540h1v1h-1zM1002,544h1v1h-1zM1004,548h1v1h-1zM1007,552h1v1h-1zM1010,556h1v1h-1zM1012,560h1v1h-1zM1015,564h1v1h-1zM1018,568h1v1h-1zM1020,572h1v1h-1zM1023,576h1v1h-1zM1026,580h1v1h-1zM1028,584h1v1h-1zM1031,588h1v1h-1zM1034,592h1v1h-1zM1037,596h1v1h-1zM1039,600h1v1h-1zM1042,604h1v1h-1zM1045,608h1v1h-1zM1047,612h1v1h-1zM1050,616h1v1h-1zM1053,620h1v1h-1zM1056,624h1v1h-1zM1062,535h1v1h-1zM1062,539h1v1h-1zM1061,543h1v1h-1zM1061,547h1v1h-1zM1061,551h1v1h-1zM1061,555h1v1h-1zM1060,559h1v1h-1zM1060,563h1v1h-1zM1060,567h1v1h-1zM1059,571h1v1h-1zM1059,575h1v1h-1zM1059,580h1v1h-1zM1058,584h1v1h-1zM1058,588h1v1h-1zM1058,592h1v1h-1zM1058,596h1v1h-1zM1057,600h1v1h-1zM1057,604h1v1h-1zM1057,608h1v1h-1zM1056,612h1v1h-1zM1056,616h1v1h-1zM1056,620h1v1h-1zM1056,624h1v1h-1z" fill="#ff0000" shape-rendering="crispEdges"/>
<g shape-rendering="geometricPrecision" fill="none" stroke-linejoin="round">
<polyline points="708.1,431.4 888.1,401.0 900.5,414.3 918.6,410.5" stroke="#1c3434" stroke-width="2"/>
<polyline points="902.4,391.4 915.5,389.5 916.7,390.7 917.2,410.9 915.5,412.4 895.7,415.8" stroke="#223d3d" stroke-width="2"/>
<polyline points="911.1,403.8 924.3,401.9 925.4,403.0 926.0,423.2 924.3,424.8 904.5,428.2" stroke="#223d3d" stroke-width="2"/>
<polyline points="919.9,416.2 933.0,414.3 934.2,415.4 934.8,435.6 933.0,437.1 913.2,440.6" stroke="#223d3d" stroke-width="2"/>
<polyline points="928.7,428.6 941.8,426.7 943.0,427.8 943.5,448.0 941.8,449.5 922.0,453.0" stroke="#223d3d" stroke-width="2"/>
<polyline points="937.4,441.0 950.6,439.0 951.7,440.2 952.3,460.4 950.6,461.9 930.8,465.3" stroke="#223d3d" stroke-width="2"/>
<polyline points="946.2,453.3 959.3,451.4 960.5,452.6 961.0,472.8 959.3,474.3 939.5,477.7" stroke="#223d3d" stroke-width="2"/>
<polyline points="955.0,465.7 968.1,463.8 969.2,465.0 969.8,485.1 968.1,486.7 948.3,490.1" stroke="#223d3d" stroke-width="2"/>
<polyline points="963.7,478.1 976.9,476.2 978.0,477.3 978.6,497.5 976.9,499.0 957.0,502.5" stroke="#223d3d" stroke-width="2"/>
<polyline points="972.5,490.5 985.6,488.6 986.8,489.7 987.3,509.9 985.6,511.4 965.8,514.9" stroke="#223d3d" stroke-width="2"/>
<polyline points="897.6,391.8 969.6,490.5" stroke="#1c3434" stroke-width="1.8"/>
<polyline points="900.5,414.3 970.0,513.3" stroke="#1c3434" stroke-width="1.8"/>
<polyline points="905.2,444.8 905.2,494.3" stroke="#1c3434" stroke-width="2"/>
<polyline points="920.5,445.7 920.5,494.3" stroke="#1c3434" stroke-width="2"/>
<polyline points="909.0,442.9 928.1,443.8 935.7,448.6" stroke="#1c3434" stroke-width="2"/>
<polyline points="905.2,494.3 965.2,559.0" stroke="#1c3434" stroke-width="2.2"/>
<polyline points="935.7,494.3 965.2,559.0" stroke="#1c3434" stroke-width="2"/>
<polyline points="956.7,503.8 965.2,517.1 965.2,559.0" stroke="#1c3434" stroke-width="2"/>
<polyline points="965.2,517.1 985.2,511.4 987.1,490.5 970.0,494.3" stroke="#223d3d" stroke-width="1.8"/>
</g>
<line x1="708" y1="463.8" x2="895.7" y2="485.1" stroke="#00e5ee" stroke-width="1.6" shape-rendering="geometricPrecision"/>
<rect x="909.1" y="455.2" width="3" height="29.600000000000023" fill="#d8d000"/>
<rect x="927.5" y="452" width="3" height="42.30000000000001" fill="#d8d000"/>
<rect x="931.9" y="455" width="3" height="27.899999999999977" fill="#d8d000"/>
<rect x="903.7" y="484.8" width="3" height="9.5" fill="#d8d000"/>
<rect x="894.5" y="470.5" width="3" height="13.5" fill="#ffffff"/>
<g shape-rendering="geometricPrecision" fill="none">
<polygon points="905.2,486.7 936.7,481.0 952.9,501.9 919.5,507.6" stroke="#d9706a" stroke-width="1.2"/>
<polygon points="911.0,489.5 935.7,484.8 948.1,501.0 923.3,505.3" stroke="#e08880" stroke-width="1.2"/>
<line x1="888.1" y1="480.0" x2="906.2" y2="511.4" stroke="#e0908a" stroke-width="1"/>
<line x1="896.7" y1="486.7" x2="901.4" y2="494.3" stroke="#20d020" stroke-width="1.2"/>
<circle cx="926.2" cy="486.7" r="2" stroke="#e0e0e0" stroke-width="1"/>
<circle cx="928.8" cy="492.5" r="1.8" fill="#c040c0"/>
</g>
<rect x="66" y="887" width="1417" height="2" fill="#7b7b7b" />
<rect x="66" y="887" width="2" height="141" fill="#7b7b7b" />
<rect x="68" y="888" width="1401" height="140" fill="#ffffff" />
<rect x="1469" y="889" width="12" height="139" fill="#d9d9d9" />
<rect x="1481" y="888" width="2" height="140" fill="#ffffff" />
<polygon points="1470,900 1475.5,889 1481,900" fill="#d9d9d9" stroke="#7b7b7b" stroke-width="1" shape-rendering="geometricPrecision"/>
<polyline points="1470.5,900 1475.5,889.5" stroke="#ffffff" stroke-width="1" fill="none"/>
<text x="90.5" y="902" font-family="Liberation Mono" font-size="12.6" fill="#8c8c8c" textLength="28" lengthAdjust="spacingAndGlyphs">128:</text>
<text x="125.5" y="902" font-family="Liberation Mono" font-size="12.6" fill="#000" textLength="287" lengthAdjust="spacingAndGlyphs" style="white-space:pre">G3 X44.0000 Y45.7908 I5.7092 J0.0000 F400</text>
<text x="90.5" y="917" font-family="Liberation Mono" font-size="12.6" fill="#8c8c8c" textLength="28" lengthAdjust="spacingAndGlyphs">129:</text>
<text x="125.5" y="917" font-family="Liberation Mono" font-size="12.6" fill="#000" textLength="252" lengthAdjust="spacingAndGlyphs" style="white-space:pre">G3 X49.7092 Y51.5000 I0.0000 J5.7092</text>
<text x="90.5" y="932" font-family="Liberation Mono" font-size="12.6" fill="#8c8c8c" textLength="28" lengthAdjust="spacingAndGlyphs">130:</text>
<text x="125.5" y="932" font-family="Liberation Mono" font-size="12.6" fill="#000" textLength="259" lengthAdjust="spacingAndGlyphs" style="white-space:pre">G3 X44.0000 Y57.2092 I-5.7092 J0.0000</text>
<text x="90.5" y="947" font-family="Liberation Mono" font-size="12.6" fill="#8c8c8c" textLength="28" lengthAdjust="spacingAndGlyphs">131:</text>
<text x="125.5" y="947" font-family="Liberation Mono" font-size="12.6" fill="#000" textLength="266" lengthAdjust="spacingAndGlyphs" style="white-space:pre">G3 X38.2908 Y51.5000 I-0.0000 J-5.7092</text>
<text x="90.5" y="962" font-family="Liberation Mono" font-size="12.6" fill="#8c8c8c" textLength="28" lengthAdjust="spacingAndGlyphs">132:</text>
<text x="90.5" y="977" font-family="Liberation Mono" font-size="12.6" fill="#8c8c8c" textLength="28" lengthAdjust="spacingAndGlyphs">133:</text>
<text x="125.5" y="977" font-family="Liberation Mono" font-size="12.6" fill="#000" textLength="84" lengthAdjust="spacingAndGlyphs" style="white-space:pre">G0   Z5.0000</text>
<text x="90.5" y="992" font-family="Liberation Mono" font-size="12.6" fill="#8c8c8c" textLength="28" lengthAdjust="spacingAndGlyphs">134:</text>
<text x="125.5" y="992" font-family="Liberation Mono" font-size="12.6" fill="#000" textLength="126" lengthAdjust="spacingAndGlyphs" style="white-space:pre">G0 X0.0000 Y0.0000</text>
<text x="90.5" y="1007" font-family="Liberation Mono" font-size="12.6" fill="#8c8c8c" textLength="28" lengthAdjust="spacingAndGlyphs">135:</text>
<text x="125.5" y="1007" font-family="Liberation Mono" font-size="12.6" fill="#000" textLength="63" lengthAdjust="spacingAndGlyphs" style="white-space:pre">G0Z5.0000</text>
<text x="90.5" y="1022" font-family="Liberation Mono" font-size="12.6" fill="#8c8c8c" textLength="28" lengthAdjust="spacingAndGlyphs">136:</text>
<text x="125.5" y="1022" font-family="Liberation Mono" font-size="12.6" fill="#000" textLength="112" lengthAdjust="spacingAndGlyphs" style="white-space:pre">G0X0.0000Y0.0000</text>
<rect x="66" y="1028" width="1417" height="22" fill="#d9d9d9" />
<rect x="66" y="1028" width="1417" height="1" fill="#8a8a8a" />
<rect x="66" y="1029" width="117" height="20" fill="#d9d9d9" />
<polygon points="66,1029 183,1029 182,1030 67,1030 67,1048 66,1049" fill="#7b7b7b"/>
<polygon points="183,1029 183,1049 66,1049 67,1048 182,1048 182,1030" fill="#ffffff"/>
<rect x="183" y="1029" width="1096" height="20" fill="#d9d9d9" />
<polygon points="183,1029 1279,1029 1278,1030 184,1030 184,1048 183,1049" fill="#7b7b7b"/>
<polygon points="1279,1029 1279,1049 183,1049 184,1048 1278,1048 1278,1030" fill="#ffffff"/>
<rect x="1278" y="1029" width="205" height="20" fill="#d9d9d9" />
<polygon points="1278,1029 1483,1029 1482,1030 1279,1030 1279,1048 1278,1049" fill="#7b7b7b"/>
<polygon points="1483,1029 1483,1049 1278,1049 1279,1048 1482,1048 1482,1030" fill="#ffffff"/>
<text x="68.6" y="1044" font-family="Liberation Sans" font-size="13" fill="#000" textLength="17.9" lengthAdjust="spacingAndGlyphs" >ON</text>
<text x="186.0" y="1044" font-family="Liberation Sans" font-size="13" fill="#000" textLength="169.99" lengthAdjust="spacingAndGlyphs" >Tool 8, offset 30, diameter 8</text>
<text x="1281.4" y="1043.2" font-family="Liberation Sans" font-size="13" fill="#000" textLength="142.36" lengthAdjust="spacingAndGlyphs" >Position: Relative Actual</text>
<rect x="1484" y="52" width="195" height="977" fill="#d9d9d9" />
<rect x="1488" y="56" width="188" height="940" fill="#f2f1f0" />
<rect x="1489.5" y="65.5" width="186" height="826" rx="3" ry="3" fill="none" stroke="#d6d3cf" stroke-width="1" shape-rendering="geometricPrecision"/>
<rect x="1491" y="60" width="58" height="10" fill="#f2f1f0" />
<text x="1493.0" y="70" font-family="Liberation Sans" font-size="14.5" font-weight="bold" fill="#555555" textLength="52.97" lengthAdjust="spacingAndGlyphs" >Spindle</text>
<g shape-rendering="geometricPrecision">
<circle cx="1588.3" cy="265" r="86" fill="#ffffff" stroke="#555" stroke-width="0.8"/>
<path d="M1547.80,335.15 A81,81 0 1,1 1628.80,335.15" stroke="#00ec00" stroke-width="10" fill="none"/>
<circle cx="1588.3" cy="265" r="86" fill="none" stroke="#444" stroke-width="0.8"/>
<line x1="1552.30" y1="327.35" x2="1545.30" y2="339.48" stroke="#000" stroke-width="1.4"/>
<line x1="1529.32" y1="306.30" x2="1517.85" y2="314.33" stroke="#000" stroke-width="1.4"/>
<line x1="1517.39" y1="277.50" x2="1503.61" y2="279.93" stroke="#000" stroke-width="1.4"/>
<line x1="1518.75" y1="246.37" x2="1505.23" y2="242.74" stroke="#000" stroke-width="1.4"/>
<line x1="1533.14" y1="218.72" x2="1522.42" y2="209.72" stroke="#000" stroke-width="1.4"/>
<line x1="1557.87" y1="199.75" x2="1551.95" y2="187.06" stroke="#000" stroke-width="1.4"/>
<line x1="1588.30" y1="193.00" x2="1588.30" y2="179.00" stroke="#000" stroke-width="1.4"/>
<line x1="1618.73" y1="199.75" x2="1624.65" y2="187.06" stroke="#000" stroke-width="1.4"/>
<line x1="1643.46" y1="218.72" x2="1654.18" y2="209.72" stroke="#000" stroke-width="1.4"/>
<line x1="1657.85" y1="246.37" x2="1671.37" y2="242.74" stroke="#000" stroke-width="1.4"/>
<line x1="1659.21" y1="277.50" x2="1672.99" y2="279.93" stroke="#000" stroke-width="1.4"/>
<line x1="1647.28" y1="306.30" x2="1658.75" y2="314.33" stroke="#000" stroke-width="1.4"/>
<line x1="1624.30" y1="327.35" x2="1631.30" y2="339.48" stroke="#000" stroke-width="1.4"/>
</g>
<text x="1556" y="324.3" font-family="Liberation Sans" font-size="9" fill="#000" text-anchor="middle" >0</text>
<text x="1536" y="305.0" font-family="Liberation Sans" font-size="9" fill="#000" text-anchor="middle" >2000</text>
<text x="1525.3" y="280.1" font-family="Liberation Sans" font-size="9" fill="#000" text-anchor="middle" >4000</text>
<text x="1525.6" y="252.0" font-family="Liberation Sans" font-size="9" fill="#000" text-anchor="middle" >6000</text>
<text x="1538.9" y="227.60000000000002" font-family="Liberation Sans" font-size="9" fill="#000" text-anchor="middle" >8000</text>
<text x="1561.5" y="210.9" font-family="Liberation Sans" font-size="9" fill="#000" text-anchor="middle" >10000</text>
<text x="1587.7" y="205.5" font-family="Liberation Sans" font-size="9" fill="#000" text-anchor="middle" >12000</text>
<text x="1614.9" y="210.9" font-family="Liberation Sans" font-size="9" fill="#000" text-anchor="middle" >14000</text>
<text x="1636.6" y="227.60000000000002" font-family="Liberation Sans" font-size="9" fill="#000" text-anchor="middle" >16000</text>
<text x="1649.2" y="252.0" font-family="Liberation Sans" font-size="9" fill="#000" text-anchor="middle" >18000</text>
<text x="1650.2" y="280.1" font-family="Liberation Sans" font-size="9" fill="#000" text-anchor="middle" >20000</text>
<text x="1640.2" y="305.0" font-family="Liberation Sans" font-size="9" fill="#000" text-anchor="middle" >22000</text>
<text x="1619.4" y="323.5" font-family="Liberation Sans" font-size="9" fill="#000" text-anchor="middle" >24000</text>
<text x="1537.4" y="257" font-family="Liberation Sans" font-size="19" fill="#000" textLength="102.58" lengthAdjust="spacingAndGlyphs" >Spindle rpm</text>
<text x="1576.0" y="338.3" font-family="Liberation Sans" font-size="19" fill="#000" textLength="26.01" lengthAdjust="spacingAndGlyphs" >0.0</text>
<polygon points="1553.3,323.8 1589,253 1587.5,263.5 1598,258.7" fill="#ff0000" shape-rendering="geometricPrecision"/>
<text x="1530.0" y="571" font-family="Liberation Sans" font-size="14" fill="#555555" textLength="32.97" lengthAdjust="spacingAndGlyphs" >flush</text>
<circle cx="1633" cy="564.8" r="11" fill="#ff0000" stroke="#000" stroke-width="1.5" shape-rendering="geometricPrecision"/>
<text x="1533.4" y="787.5" font-family="Liberation Sans" font-size="14" fill="#555555" textLength="26.49" lengthAdjust="spacingAndGlyphs" >lock</text>
<circle cx="1633" cy="781.8" r="11" fill="#ff0000" stroke="#000" stroke-width="1.5" shape-rendering="geometricPrecision"/>
<rect x="1489.5" y="903.5" width="186" height="32" rx="3" ry="3" fill="none" stroke="#d6d3cf" stroke-width="1" shape-rendering="geometricPrecision"/>
<rect x="1491" y="895" width="152" height="12" fill="#f2f1f0" />
<text x="1494.0" y="906.7" font-family="Liberation Sans" font-size="14.5" font-weight="bold" fill="#555555" textLength="147.05" lengthAdjust="spacingAndGlyphs" >Temperature spindle</text>
<circle cx="1587.7" cy="921.5" r="11" fill="#ff0000" stroke="#000" stroke-width="1.5" shape-rendering="geometricPrecision"/>
<rect x="1489.5" y="947.5" width="186" height="32" rx="3" ry="3" fill="none" stroke="#d6d3cf" stroke-width="1" shape-rendering="geometricPrecision"/>
<rect x="1491" y="938" width="182" height="12" fill="#f2f1f0" />
<text x="1494.0" y="950.5" font-family="Liberation Sans" font-size="14.5" font-weight="bold" fill="#555555" textLength="176.0" lengthAdjust="spacingAndGlyphs" >Tool sense and exchange</text>
<rect x="1505.5" y="959.5" width="13" height="13" rx="2" fill="#fff" stroke="#a8a6a2" stroke-width="1" shape-rendering="geometricPrecision"/>
<text x="1526.7" y="971.3" font-family="Liberation Sans" font-size="14" fill="#555555" textLength="111.65" lengthAdjust="spacingAndGlyphs" >no measurement</text>
<circle cx="1658.8" cy="965.9" r="11" fill="#ff0000" stroke="#000" stroke-width="1.5" shape-rendering="geometricPrecision"/>
<rect x="1489.5" y="991.5" width="186" height="18" rx="3" ry="3" fill="none" stroke="#d6d3cf" stroke-width="1" shape-rendering="geometricPrecision"/>
<rect x="1491" y="982" width="40" height="12" fill="#f2f1f0" />
<text x="1494.6" y="994.2" font-family="Liberation Sans" font-size="14.5" font-weight="bold" fill="#555555" textLength="33.42" lengthAdjust="spacingAndGlyphs" >Auto</text>
<rect x="1341" y="996" width="339" height="34" fill="#d9d9d9" />
<rect x="1483" y="1029" width="197" height="21" fill="#d9d9d9" />
<text x="1343.4" y="1010" font-family="Liberation Sans" font-size="13" fill="#000" textLength="283.04" lengthAdjust="spacingAndGlyphs" >can't do that (EMC_SPINDLE_ON) in auto mode</text>
<text x="1343.51" y="1025" font-family="Liberation Sans" font-size="13" fill="#000" textLength="167.34" lengthAdjust="spacingAndGlyphs" >with the interpreter reading</text>
<g shape-rendering="geometricPrecision"><circle cx="1646.5" cy="1013.5" r="14.5" fill="#7a7a7a" opacity="0.5"/><circle cx="1645" cy="1011.7" r="14.5" fill="#e8000b"/><path d="M1638.5,1005 L1651.5,1018.5 M1651.5,1005 L1638.5,1018.5" stroke="#fff" stroke-width="3.2"/></g>
<rect x="1664" y="1005" width="15" height="15" fill="#d9d9d9" />
<polygon points="1664,1005 1679,1005 1678,1006 1665,1006 1665,1019 1664,1020" fill="#ffffff"/>
<polygon points="1679,1005 1679,1020 1664,1020 1665,1019 1678,1019 1678,1006" fill="#7b7b7b"/>
<path d="M1667.5,1008.5 L1675.5,1016.5 M1675.5,1008.5 L1667.5,1016.5" stroke="#000" stroke-width="1.3" shape-rendering="geometricPrecision"/>
<g shape-rendering="geometricPrecision">
<path d="M461,295 L461,273 Q461,267 467,267 L702,267 Q708,267 708,273 L708,295 Z" fill="url(#ttl)"/>
<path d="M463,267.5 H706" stroke="#5e5c56" stroke-width="1"/>
</g>
<rect x="461" y="295" width="247" height="169" fill="#d9d9d9" />
<g shape-rendering="geometricPrecision"><defs><linearGradient id="cls" x1="0" y1="0" x2="0" y2="1"><stop offset="0" stop-color="#f58a62"/><stop offset="1" stop-color="#e0501a"/></linearGradient></defs><circle cx="480.6" cy="281" r="7.6" fill="url(#cls)" stroke="#2e2d2a" stroke-width="0.8"/><path d="M477.8,278.2 L483.4,283.8 M483.4,278.2 L477.8,283.8" stroke="#3c1a10" stroke-width="1.1"/></g>
<text x="501.4" y="286" font-family="Liberation Sans" font-size="14.5" font-weight="bold" fill="#dfdbd2" textLength="134.64" lengthAdjust="spacingAndGlyphs" >Touch Off (system)</text>
<text x="476.0" y="318" font-family="Liberation Sans" font-size="13" fill="#000" textLength="177.05" lengthAdjust="spacingAndGlyphs" >Enter X coordinate relative to</text>
<text x="476.1" y="332.4" font-family="Liberation Sans" font-size="13" fill="#000" textLength="64.53" lengthAdjust="spacingAndGlyphs" >workpiece:</text>
<rect x="532" y="340" width="168" height="23" fill="#000000" />
<rect x="533" y="341" width="166" height="21" fill="#7b7b7b" />
<rect x="534" y="342" width="165" height="20" fill="#ffffff" />
<rect x="534" y="343" width="21" height="16" fill="#000080" />
<rect x="534" y="343" width="1" height="16" fill="#000" />
<text x="536.0" y="356" font-family="Liberation Sans" font-size="13" fill="#ffffff" textLength="17.97" lengthAdjust="spacingAndGlyphs" >0.0</text>
<text x="471.4" y="406" font-family="Liberation Sans" font-size="13" fill="#000" textLength="116.56" lengthAdjust="spacingAndGlyphs" >Coordinate System:</text>
<rect x="593" y="388" width="105" height="26" fill="#d9d9d9" />
<polygon points="593,388 698,388 696,390 595,390 595,412 593,414" fill="#ffffff"/>
<polygon points="698,388 698,414 593,414 595,412 696,412 696,390" fill="#7b7b7b"/>
<text x="608.0" y="405.6" font-family="Liberation Sans" font-size="13" fill="#000" textLength="47.0" lengthAdjust="spacingAndGlyphs" >P1  G54</text>
<rect x="675" y="399" width="15" height="5" fill="#d9d9d9" />
<polygon points="675,399 690,399 689,400 676,400 676,403 675,404" fill="#ffffff"/>
<polygon points="690,399 690,404 675,404 676,403 689,403 689,400" fill="#7b7b7b"/>
<rect x="498" y="423" width="92" height="27" fill="#d9d9d9" />
<polygon points="498,423 590,423 589,424 499,424 499,449 498,450" fill="#7b7b7b"/>
<polygon points="590,423 590,450 498,450 499,449 589,449 589,424" fill="#ffffff"/>
<rect x="501" y="426" width="86" height="21" fill="#d9d9d9" />
<polygon points="501,426 587,426 585,428 503,428 503,445 501,447" fill="#ffffff"/>
<polygon points="587,426 587,447 501,447 503,445 585,445 585,428" fill="#7b7b7b"/>
<text x="535.4" y="441" font-family="Liberation Sans" font-size="13" fill="#000" textLength="16.58" lengthAdjust="spacingAndGlyphs" >OK</text>
<rect x="605" y="426" width="86" height="21" fill="#d9d9d9" />
<polygon points="605,426 691,426 689,428 607,428 607,445 605,447" fill="#ffffff"/>
<polygon points="691,426 691,447 605,447 607,445 689,445 689,428" fill="#7b7b7b"/>
<text x="628.6" y="441" font-family="Liberation Sans" font-size="13" fill="#000" textLength="39.37" lengthAdjust="spacingAndGlyphs" >Cancel</text>
<defs>
<linearGradient id="tOr" x1="0" y1="0" x2="0" y2="1"><stop offset="0" stop-color="#eaa27c"/><stop offset="0.5" stop-color="#e07e4e"/><stop offset="1" stop-color="#d9723f"/></linearGradient>
<linearGradient id="tBl" x1="0" y1="0" x2="0" y2="1"><stop offset="0" stop-color="#6fb6e6"/><stop offset="1" stop-color="#3a8fcb"/></linearGradient>
<linearGradient id="tGr" x1="0" y1="0" x2="0" y2="1"><stop offset="0" stop-color="#7fd86f"/><stop offset="1" stop-color="#3fb83a"/></linearGradient>
<linearGradient id="tRd" x1="0" y1="0" x2="0" y2="1"><stop offset="0" stop-color="#e46868"/><stop offset="1" stop-color="#cf4a4a"/></linearGradient>
<linearGradient id="tGy" x1="0" y1="0" x2="0" y2="1"><stop offset="0" stop-color="#f2f2f2"/><stop offset="1" stop-color="#cfcfcf"/></linearGradient>
<linearGradient id="tDk" x1="0" y1="0" x2="0" y2="1"><stop offset="0" stop-color="#4a4a4a"/><stop offset="0.5" stop-color="#2e2e2e"/><stop offset="1" stop-color="#272727"/></linearGradient>
<linearGradient id="tBfb" x1="0" y1="0" x2="0" y2="1"><stop offset="0" stop-color="#3e3134"/><stop offset="1" stop-color="#241a1c"/></linearGradient>
<linearGradient id="fBody" x1="0" y1="0" x2="0" y2="1"><stop offset="0" stop-color="#f0a070"/><stop offset="1" stop-color="#e0602a"/></linearGradient>
<radialGradient id="ffG" cx="0.55" cy="0.4" r="0.6"><stop offset="0" stop-color="#6ab0e8"/><stop offset="1" stop-color="#1d4a9a"/></radialGradient>
</defs>
<g shape-rendering="geometricPrecision">
<rect x="7" y="31" width="50" height="51" rx="7" fill="url(#tBfb)" stroke="#5a4a4e" stroke-width="0.8"/>
<circle cx="32" cy="56.5" r="15" fill="#f4f4f4"/>
<circle cx="32" cy="56.5" r="7.2" fill="none" stroke="#3a2e30" stroke-width="2.4"/>
<circle cx="37.2" cy="47.3" r="3.4" fill="#f4f4f4"/><circle cx="37.2" cy="47.3" r="2.2" fill="#3a2e30"/>
<circle cx="21.5" cy="56.5" r="3.4" fill="#f4f4f4"/><circle cx="21.5" cy="56.5" r="2.2" fill="#3a2e30"/>
<circle cx="37.2" cy="65.7" r="3.4" fill="#f4f4f4"/><circle cx="37.2" cy="65.7" r="2.2" fill="#3a2e30"/>
<rect x="6.5" y="88.0" width="51" height="51" rx="7" fill="url(#tOr)" stroke="#f0a070" stroke-width="1"/>
<rect x="10" y="99" width="44" height="8" rx="1" fill="#f2f2f2"/>
<rect x="13" y="100.5" width="12" height="2" fill="#e88850"/>
<path d="M10,106 H54 L53,135 H11 Z" fill="url(#fBody)"/>
<rect x="6.5" y="146.5" width="51" height="51" rx="7" fill="#d38a58" stroke="#eea272" stroke-width="1"/>
<defs><linearGradient id="fxO" x1="0" y1="0" x2="0" y2="1"><stop offset="0" stop-color="#f39a28"/><stop offset="1" stop-color="#d04816"/></linearGradient><radialGradient id="fxB" cx="0.35" cy="0.2" r="0.9"><stop offset="0" stop-color="#8fd4f4"/><stop offset="0.5" stop-color="#2c7ac4"/><stop offset="1" stop-color="#1a2f78"/></radialGradient></defs>
<circle cx="32.3" cy="171.7" r="21" fill="url(#fxO)"/>
<circle cx="34" cy="166.5" r="17" fill="url(#fxB)"/>
<path d="M12,175 Q11,162 17,154 L14.5,148 L22,153.5 Q25,152 27.5,154.5 L27,149 L31.5,157.5 Q26,160 24.5,166 Q23.5,173 31,175 Q37,176 37.5,177.5 Q33,181 27,180 Q36,187 47,183.5 Q41,193 28,193 Q14,190 12,175 Z" fill="url(#fxO)"/>
<path d="M42,150 Q55,159 53.5,174 Q52.5,186 44,190.5 Q50,180 49,169 Q48,158 42,150 Z" fill="#f6c424"/>
<path d="M44,153 Q50,158 50,166" stroke="#fff" stroke-width="1.2" fill="none" opacity="0.7"/>
<rect x="6.5" y="204.5" width="51" height="51" rx="7" fill="url(#tBl)" stroke="#8ac8f0" stroke-width="1"/>
<path d="M12,207.5 H42 L52,217.5 V253 H12 Z" fill="#1f5d8c"/>
<path d="M15,210.5 H40.5 L49,219 V250 H15 Z" fill="#ececec"/>
<path d="M42,207.5 H52 V217.5 Z" fill="#2f7ab8"/>
<rect x="20" y="226" width="8" height="1.6" fill="#1f5d8c"/>
<rect x="20" y="230" width="8" height="1.6" fill="#1f5d8c"/>
<rect x="20" y="234" width="8" height="1.6" fill="#1f5d8c"/>
<rect x="31" y="224" width="13" height="9" fill="#1f5d8c"/><path d="M32,232 L36,227 L39,230 L41,228 L43,232 Z" fill="#888"/>
<rect x="20" y="237" width="24" height="1.6" fill="#1f5d8c"/>
<rect x="20" y="241" width="24" height="1.6" fill="#1f5d8c"/>
<rect x="20" y="245" width="24" height="1.6" fill="#1f5d8c"/>
<rect x="6.5" y="262.5" width="51" height="51" rx="7" fill="url(#tGr)" stroke="#9fe88f" stroke-width="1"/>
<path d="M12,265.5 H42 L52,275.5 V311 H12 Z" fill="#2a8a2a"/>
<path d="M15,268.5 H40.5 L49,277 V308 H15 Z" fill="#ececec"/>
<path d="M42,265.5 H52 V275.5 Z" fill="#3aa83a"/>
<rect x="20" y="282" width="5" height="3" fill="#3a9a3a"/>
<rect x="26" y="282" width="5" height="3" fill="#3a9a3a"/>
<rect x="32" y="282" width="5" height="3" fill="#3a9a3a"/>
<rect x="20" y="286" width="5" height="3" fill="#3a9a3a"/>
<rect x="26" y="286" width="5" height="3" fill="#3a9a3a"/>
<rect x="32" y="286" width="5" height="3" fill="#3a9a3a"/>
<rect x="20" y="290" width="5" height="3" fill="#3a9a3a"/>
<rect x="26" y="290" width="5" height="3" fill="#3a9a3a"/>
<rect x="32" y="290" width="5" height="3" fill="#3a9a3a"/>
<rect x="20" y="294" width="5" height="3" fill="#3a9a3a"/>
<rect x="26" y="294" width="5" height="3" fill="#3a9a3a"/>
<rect x="32" y="294" width="5" height="3" fill="#3a9a3a"/>
<rect x="20" y="298" width="5" height="3" fill="#3a9a3a"/>
<rect x="26" y="298" width="5" height="3" fill="#3a9a3a"/>
<rect x="32" y="298" width="5" height="3" fill="#3a9a3a"/>
<rect x="35" y="294" width="10" height="10" fill="#fff" stroke="#888" stroke-width="0.6"/><rect x="37" y="298" width="2" height="5" fill="#2a7ad0"/><rect x="40" y="295" width="2" height="8" fill="#e04020"/><rect x="43" y="300" width="2" height="3" fill="#f0b000"/>
<rect x="6.5" y="320.5" width="51" height="51" rx="7" fill="url(#tOr)" stroke="#f0a070" stroke-width="1"/>
<path d="M12,323.5 H42 L52,333.5 V369 H12 Z" fill="#8a3a1a"/>
<path d="M15,326.5 H40.5 L49,335 V366 H15 Z" fill="#ececec"/>
<path d="M42,323.5 H52 V333.5 Z" fill="#b05a30"/>
<rect x="20" y="340" width="24" height="16" fill="#f4e0d0" stroke="#a04a20" stroke-width="1.4"/>
<rect x="23" y="344" width="6" height="1.5" fill="#a04a20"/><rect x="23" y="348" width="6" height="1.5" fill="#a04a20"/><rect x="31" y="343" width="10" height="9" fill="#fff" stroke="#2a8a4a" stroke-width="0.8"/>
<path d="M32,361 L26,364 M32,356 V361 M32,361 L38,364" stroke="#888" stroke-width="1"/>
<rect x="6.5" y="378.5" width="51" height="51" rx="7" fill="url(#tOr)" stroke="#f0a070" stroke-width="1"/>
<defs><radialGradient id="glow" cx="0.5" cy="0.5" r="0.5"><stop offset="0" stop-color="#ffffff" stop-opacity="0.9"/><stop offset="1" stop-color="#ffffff" stop-opacity="0"/></radialGradient></defs>
<ellipse cx="32" cy="396" rx="17" ry="10" fill="url(#glow)"/>
<circle cx="22" cy="389" r="2.8" fill="#4a80c8"/>
<circle cx="28" cy="387" r="1.8" fill="#f0e0e0"/>
<circle cx="36" cy="386" r="2.6" fill="#f4f0f0"/>
<circle cx="41" cy="391" r="2.2" fill="#f0e8e0"/>
<circle cx="47" cy="386" r="1.5" fill="#f4f4f4"/>
<circle cx="19" cy="396" r="2" fill="#b0b0b8"/>
<circle cx="31" cy="393" r="1.6" fill="#505060"/>
<circle cx="46" cy="395" r="1.5" fill="#e0e0f0"/>
<path d="M26,402 V396 H35 V403" stroke="#d86a30" stroke-width="1.8" fill="none"/>
<polygon points="14.5,399 48,403 48.5,426 14.5,421.5" fill="#cf5a22"/>
<rect x="6.5" y="436.5" width="51" height="51" rx="7" fill="url(#tOr)" stroke="#f0a070" stroke-width="1"/>
<rect x="12" y="443" width="40" height="40" rx="2" fill="#e4682e" stroke="#c85020" stroke-width="0.8"/>
<path d="M21,451 L29,449 V469 Q32,472 35,469 V451 H43 V470 Q43,479 32,479 Q21,479 21,470 Z" fill="#eee"/>
<rect x="6.5" y="494.5" width="51" height="51" rx="7" fill="url(#tRd)" stroke="#f09090" stroke-width="1"/>
<rect x="-3.5" y="-19" width="7" height="7" transform="translate(32 520) rotate(22.5)" fill="#dcdcdc"/><rect x="-3.5" y="-19" width="7" height="7" transform="translate(32 520) rotate(67.5)" fill="#dcdcdc"/><rect x="-3.5" y="-19" width="7" height="7" transform="translate(32 520) rotate(112.5)" fill="#dcdcdc"/><rect x="-3.5" y="-19" width="7" height="7" transform="translate(32 520) rotate(157.5)" fill="#dcdcdc"/><rect x="-3.5" y="-19" width="7" height="7" transform="translate(32 520) rotate(202.5)" fill="#dcdcdc"/><rect x="-3.5" y="-19" width="7" height="7" transform="translate(32 520) rotate(247.5)" fill="#dcdcdc"/><rect x="-3.5" y="-19" width="7" height="7" transform="translate(32 520) rotate(292.5)" fill="#dcdcdc"/><rect x="-3.5" y="-19" width="7" height="7" transform="translate(32 520) rotate(337.5)" fill="#dcdcdc"/>
<circle cx="32" cy="520" r="14" fill="#dcdcdc"/><circle cx="32" cy="520" r="7" fill="#b8b8b8"/>
<path d="M17,536 L43,509" stroke="#b01818" stroke-width="5.5" stroke-linecap="round"/>
<path d="M17,536 L43,509" stroke="#e04040" stroke-width="2.5" stroke-linecap="round"/>
<path d="M41,511 Q39,501 46,498 L48,503 L52,502 L53,498 Q57,506 49,512 Z" fill="#ececec"/>
<rect x="6.5" y="552.5" width="51" height="51" rx="7" fill="url(#tGy)" stroke="#f8f8f8" stroke-width="1"/>
<rect x="12.5" y="561.5" width="39" height="33" rx="1" fill="#2b2b2b" stroke="#888" stroke-width="1.2"/>
<path d="M18,573 L22,576 L18,579" stroke="#eee" stroke-width="1.6" fill="none"/><rect x="25" y="581" width="8" height="1.6" fill="#eee"/>
<rect x="6.5" y="610.5" width="51" height="51" rx="7" fill="url(#tGy)" stroke="#f8f8f8" stroke-width="1"/>
<rect x="14" y="615" width="36" height="42" fill="#f8f8f8" stroke="#aaa" stroke-width="0.8"/>
<rect x="18" y="620.0" width="26" height="0.9" fill="#bbb"/>
<rect x="18" y="623.5" width="26" height="0.9" fill="#bbb"/>
<rect x="18" y="627.0" width="26" height="0.9" fill="#bbb"/>
<rect x="18" y="630.5" width="26" height="0.9" fill="#bbb"/>
<rect x="18" y="634.0" width="26" height="0.9" fill="#bbb"/>
<rect x="18" y="637.5" width="26" height="0.9" fill="#bbb"/>
<rect x="18" y="641.0" width="26" height="0.9" fill="#bbb"/>
<rect x="18" y="644.5" width="26" height="0.9" fill="#bbb"/>
<rect x="18" y="648.0" width="26" height="0.9" fill="#bbb"/>
<rect x="18" y="651.5" width="26" height="0.9" fill="#bbb"/>
<path d="M30,649 L48,632 L51,635 L33,652 L29,653 Z" fill="#222"/><path d="M48,632 L51,635 L53,632 L50,629 Z" fill="#d080c0"/><path d="M29,653 L30,649 L33,652 Z" fill="#f0e070"/>
<rect x="6.5" y="668.5" width="51" height="51" rx="7" fill="url(#tGy)" stroke="#f8f8f8" stroke-width="1"/>
<rect x="12.5" y="675.5" width="39" height="39" rx="2" fill="#8a8a8a" stroke="#bbb" stroke-width="1"/>
</g>
<text x="32" y="707" font-family="Liberation Sans" font-size="30" fill="#6a6a6a" text-anchor="middle">?</text>
<g shape-rendering="geometricPrecision">
<rect x="6.5" y="726.5" width="51" height="51" rx="7" fill="url(#tDk)" stroke="#3a3a3a" stroke-width="1"/>
<rect x="13.5" y="739" width="37" height="25" fill="none" stroke="#f4f4f4" stroke-width="1.6"/>
<path d="M32,739 V764 M13.5,751.5 H50.5" stroke="#f4f4f4" stroke-width="0.9"/>
<rect x="17" y="742" width="5" height="3" fill="none" stroke="#ddd" stroke-width="0.8"/><rect x="19" y="744" width="6" height="4" fill="#2e2e2e" stroke="#fff" stroke-width="0.9"/>
<rect x="6.5" y="784.5" width="51" height="51" rx="7" fill="url(#tDk)" stroke="#3a3a3a" stroke-width="1"/>
<rect x="21" y="787" width="21" height="34" rx="2" fill="#e0e0e0"/><rect x="24" y="821" width="16" height="9" fill="#e8e8e8"/><rect x="26" y="823" width="4" height="3" fill="#777"/><rect x="33" y="823" width="4" height="3" fill="#777"/>
<path d="M32,795 V815 M32,803 L28,799 M32,807 L36,803" stroke="#999" stroke-width="1"/>
<rect x="6.5" y="992.5" width="51" height="51" rx="7" fill="url(#tDk)" stroke="#3a3a3a" stroke-width="1"/>
<path d="M15,1002 L18.5,1037 Q32,1041 45.5,1037 L49,1002 Z" fill="#6a6a6a" opacity="0.7"/>
<path d="M19,1014 Q22,1008 27,1011 Q31,1005 36,1010 Q41,1006 45,1013 L44,1033 Q38,1037 32,1036 Q25,1037 20,1033 Z" fill="#e8e8e8"/>
<path d="M22,1020 L28,1024 M35,1018 L40,1025 M26,1030 L33,1027" stroke="#aaa" stroke-width="1"/>
<ellipse cx="32" cy="1002" rx="17" ry="3.2" fill="none" stroke="#d8d8d8" stroke-width="1.5"/>
<path d="M0,110 H5 M0,115 H5" stroke="#e0e0e0" stroke-width="2"/>
<polygon points="0,166 5,171 0,176" fill="#e0e0e0"/>
<path d="M0,575 H5 M0,580 H5" stroke="#e0e0e0" stroke-width="2"/>
<path d="M0,634 H5 M0,639 H5" stroke="#e0e0e0" stroke-width="2"/>
<polygon points="0,688 5,693 0,698" fill="#e0e0e0"/>
</g>
<g shape-rendering="geometricPrecision">
<rect x="1380" y="6" width="23" height="12" rx="2" fill="#dfdbd2"/>
<rect x="1383.0" y="8" width="1.5" height="1.5" fill="#3c3b37"/>
<rect x="1385.5" y="8" width="1.5" height="1.5" fill="#3c3b37"/>
<rect x="1388.0" y="8" width="1.5" height="1.5" fill="#3c3b37"/>
<rect x="1390.5" y="8" width="1.5" height="1.5" fill="#3c3b37"/>
<rect x="1393.0" y="8" width="1.5" height="1.5" fill="#3c3b37"/>
<rect x="1395.5" y="8" width="1.5" height="1.5" fill="#3c3b37"/>
<rect x="1398.0" y="8" width="1.5" height="1.5" fill="#3c3b37"/>
<rect x="1400.5" y="8" width="1.5" height="1.5" fill="#3c3b37"/>
<rect x="1383.0" y="11" width="1.5" height="1.5" fill="#3c3b37"/>
<rect x="1385.5" y="11" width="1.5" height="1.5" fill="#3c3b37"/>
<rect x="1388.0" y="11" width="1.5" height="1.5" fill="#3c3b37"/>
<rect x="1390.5" y="11" width="1.5" height="1.5" fill="#3c3b37"/>
<rect x="1393.0" y="11" width="1.5" height="1.5" fill="#3c3b37"/>
<rect x="1395.5" y="11" width="1.5" height="1.5" fill="#3c3b37"/>
<rect x="1398.0" y="11" width="1.5" height="1.5" fill="#3c3b37"/>
<rect x="1400.5" y="11" width="1.5" height="1.5" fill="#3c3b37"/>
<rect x="1383" y="14" width="2" height="1.5" fill="#3c3b37"/><rect x="1386.5" y="14" width="11" height="1.5" fill="#3c3b37"/><rect x="1399" y="14" width="2" height="1.5" fill="#3c3b37"/>
<rect x="1434" y="6" width="18" height="12" rx="1" fill="#dfdbd2"/>
<path d="M1435,7 L1443,14 L1451,7" stroke="#3c3b37" stroke-width="1" fill="none"/><path d="M1435,17 L1440,12 M1451,17 L1446,12" stroke="#3c3b37" stroke-width="0.8"/>
<path d="M1472.9,16.9 A3,3 0 0,1 1477.1,16.9" stroke="#dfdbd2" stroke-width="1.8" fill="none" opacity="1" transform="translate(0 -0.5)"/>
<path d="M1470.1,14.1 A7,7 0 0,1 1479.9,14.1" stroke="#dfdbd2" stroke-width="1.8" fill="none" opacity="1" transform="translate(0 -0.5)"/>
<path d="M1467.3,11.3 A11,11 0 0,1 1482.7,11.3" stroke="#dfdbd2" stroke-width="1.8" fill="none" opacity="1" transform="translate(0 -0.5)"/>
<path d="M1464.5,8.5 A15,15 0 0,1 1485.5,8.5" stroke="#dfdbd2" stroke-width="1.8" fill="none" opacity="0.45" transform="translate(0 -0.5)"/>
<path d="M1473,18 L1475,20 L1477,18 Z" fill="#dfdbd2"/>
<path d="M1498,10 H1501 L1506,6 V18 L1501,14 H1498 Z" fill="#dfdbd2"/>
<path d="M1507.0,8.5 A3.5,3.5 0 0,1 1507,15.5" stroke="#dfdbd2" stroke-width="1.4" fill="none" transform="translate(1.2 0)"/>
<path d="M1507.0,5.5 A6.5,6.5 0 0,1 1507,18.5" stroke="#dfdbd2" stroke-width="1.4" fill="none" transform="translate(2.3 0)"/>
<path d="M1507.0,2.5 A9.5,9.5 0 0,1 1507,21.5" stroke="#dfdbd2" stroke-width="1.4" fill="none" transform="translate(3.3 0)"/>
<circle cx="1609.5" cy="9" r="3.6" fill="#dfdbd2"/><path d="M1603,18 Q1604,13 1609.5,13 Q1615,13 1616,18 Z" fill="#dfdbd2"/>
<circle cx="1664" cy="12.5" r="5.8" fill="none" stroke="#dfdbd2" stroke-width="2.2"/>
<line x1="1670.0" y1="12.5" x2="1672.2" y2="12.5" stroke="#dfdbd2" stroke-width="2.4"/>
<line x1="1668.2" y1="16.7" x2="1669.8" y2="18.3" stroke="#dfdbd2" stroke-width="2.4"/>
<line x1="1664.0" y1="18.5" x2="1664.0" y2="20.7" stroke="#dfdbd2" stroke-width="2.4"/>
<line x1="1659.8" y1="16.7" x2="1658.2" y2="18.3" stroke="#dfdbd2" stroke-width="2.4"/>
<line x1="1658.0" y1="12.5" x2="1655.8" y2="12.5" stroke="#dfdbd2" stroke-width="2.4"/>
<line x1="1659.8" y1="8.3" x2="1658.2" y2="6.7" stroke="#dfdbd2" stroke-width="2.4"/>
<line x1="1664.0" y1="6.5" x2="1664.0" y2="4.3" stroke="#dfdbd2" stroke-width="2.4"/>
<line x1="1668.2" y1="8.3" x2="1669.8" y2="6.7" stroke="#dfdbd2" stroke-width="2.4"/>
<rect x="1661" y="3" width="6" height="9" fill="#4a4843"/>
<rect x="1662.8" y="3.5" width="2.4" height="9" fill="#dfdbd2"/>
</g>
<text x="1406.0" y="17" font-family="Liberation Sans" font-size="14" fill="#dfdbd2" textLength="15.97" lengthAdjust="spacingAndGlyphs" >en</text>
<text x="1531.4" y="17" font-family="Liberation Sans" font-size="14" fill="#dfdbd2" textLength="58.92" lengthAdjust="spacingAndGlyphs" >10:33 PM</text>
<text x="1621.4" y="17" font-family="Liberation Sans" font-size="14" fill="#dfdbd2" textLength="21.59" lengthAdjust="spacingAndGlyphs" >cnc</text>
<path d="M309.8,243 L309.8,259.8 L313.3,256.4 L316,261.2 L318.6,260.1 L316.2,254.9 L320.6,254.9 Z" fill="#fff" stroke="#000" stroke-width="1.3" stroke-linejoin="round" shape-rendering="geometricPrecision"/>
</svg>
</body></html>
